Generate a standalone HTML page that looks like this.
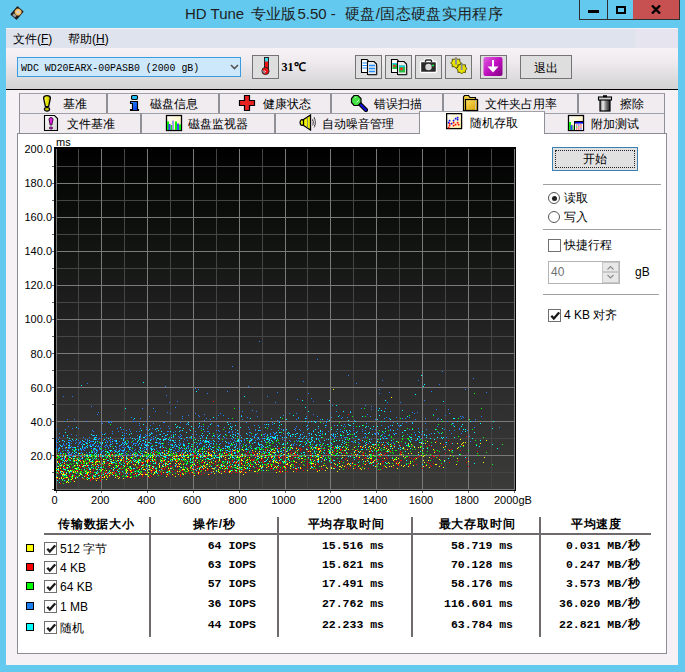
<!DOCTYPE html>
<html><head><meta charset="utf-8">
<style>
*{margin:0;padding:0;box-sizing:border-box}
html,body{width:685px;height:672px;overflow:hidden}
body{position:relative;background:#63c9ee;font-family:"Liberation Sans",sans-serif;font-size:12px;color:#000}
.a{position:absolute}
.title{top:4.5px;font-size:15px;color:#1e1e1e;white-space:nowrap;letter-spacing:0px}
.wb{top:0;height:20px;border:1px solid #2f2f2f;border-top:none}
.client{left:6px;top:28px;width:672px;height:637px;background:#f5f1f5}
.menu{left:6px;top:29px;width:672px;height:19px;background:#dfe3ee}
.mi{top:31px;font-size:12px;white-space:nowrap}
.toolbar{left:6px;top:48px;width:672px;height:41px;background:linear-gradient(#f6f2f6,#eeeaee 35%,#e1dfe1 65%,#d3d3d3)}
.tbline{left:6px;top:89px;width:672px;height:1px;background:#000}
.combo{left:17px;top:57px;width:224px;height:20px;background:#cde8fb;border:1px solid #3a9be0}
.combo span{position:absolute;left:3px;top:3.5px;font-family:"Liberation Mono",monospace;font-size:11px;line-height:13px;white-space:nowrap;transform:scaleX(0.9);transform-origin:0 0}
.btn{top:55px;height:24px;width:27px;background:#dedede;border:1px solid #747474}
.tab{height:20px;background:#f0ecf0;border-top:1px solid #a0a0a8;border-right:2px solid #8f8f97;white-space:nowrap}
.tt{font-size:12px;line-height:16px;white-space:nowrap}
.panel{left:17px;top:133px;width:650px;height:521px;background:#fff;border:1px solid #8c8c94}
.yl{position:absolute;left:14px;width:38px;text-align:right;font-size:11px;line-height:14px}
.xl{position:absolute;top:493px;width:40px;text-align:center;font-size:11px;line-height:14px}
.sep{height:1px;background:#a0a0a0}
.hd{top:516px;font-weight:bold;font-size:12px;text-align:center;white-space:nowrap;letter-spacing:0.8px}
.vl{top:517px;width:2px;height:120px;background:#6e6a6e}
.val{font-family:"Liberation Mono",monospace;font-weight:bold;font-size:11.5px;text-align:right;white-space:nowrap;line-height:14px}
.sq{left:26px;width:8px;height:8px;border:1px solid #000}
.cb{width:13px;height:13px;border:1px solid #707070;background:#fff}
.lbl{font-size:12px;white-space:nowrap;line-height:14px}
</style></head><body>
<!-- title bar -->

<div class="a title" style="left:185px">HD Tune</div><div class="a title" style="left:250.5px">专业版</div><div class="a title" style="left:297.5px">5.50 -</div><div class="a title" style="left:345px;letter-spacing:0.35px">硬盘/固态硬盘实用程序</div>
<div class="a wb" style="left:579px;width:29px"><div class="a" style="left:8px;top:10px;width:11px;height:3px;background:#000"></div></div>
<div class="a wb" style="left:607px;width:27px;border-left:none"><div class="a" style="left:9px;top:5.5px;width:10px;height:8px;border:2px solid #000;border-left-width:2.5px;border-right-width:2.5px"></div></div>
<div class="a wb" style="left:633px;width:47px;background:#c75050;border-left:none">
 <svg class="a" style="left:18px;top:5px" width="10" height="9" viewBox="0 0 10 9"><path d="M1 0.5L9 8.5M9 0.5L1 8.5" stroke="#000" stroke-width="2.4"/></svg>
</div>
<!-- client -->
<div class="a client"></div>
<div class="a menu"></div><div class="a" style="left:635px;top:29px;width:43px;height:19px;background:#e6e5ef"></div>
<div class="a mi" style="left:13px">文件(<u>F</u>)</div>
<div class="a mi" style="left:68px">帮助(<u>H</u>)</div>
<div class="a toolbar"></div>
<div class="a tbline"></div>
<div class="a combo"><span>WDC WD20EARX-00PASB0 (2000 gB)</span>
 <svg class="a" style="left:212px;top:6px" width="9" height="6"><path d="M1 1L4.5 4.5L8 1" stroke="#555" stroke-width="1.6" fill="none"/></svg></div>
<div class="a btn" style="left:252px">
 
</div>
<div class="a" style="left:281.5px;top:60px;font-family:'Liberation Serif',serif;font-weight:bold;font-size:12px;line-height:14px;white-space:nowrap">31<span style="font-size:12px;letter-spacing:-1px">℃</span></div>
<div class="a btn" style="left:355px"></div>
<div class="a btn" style="left:385px"></div>
<div class="a btn" style="left:415px"></div>
<div class="a btn" style="left:445px"></div>
<div class="a btn" style="left:480px"></div>
<div class="a btn" style="left:520px;width:52px"><div class="a" style="left:0;top:4px;width:50px;text-align:center;font-size:12px">退出</div></div>

<!-- tabs row 1 -->
<div class="a tab" style="left:19px;top:93px;width:89px;border-left:1px solid #8f8f97;"></div><div class="a tt" style="left:63.2px;top:95.8px">基准</div>
<div class="a tab" style="left:108px;top:93px;width:112px;"></div><div class="a tt" style="left:150.2px;top:95.8px">磁盘信息</div>
<div class="a tab" style="left:220px;top:93px;width:112px;"></div><div class="a tt" style="left:262.7px;top:95.8px">健康状态</div>
<div class="a tab" style="left:332px;top:93px;width:112px;"></div><div class="a tt" style="left:373.7px;top:95.8px">错误扫描</div>
<div class="a tab" style="left:444px;top:93px;width:135px;"></div><div class="a tt" style="left:485.2px;top:95.8px">文件夹占用率</div>
<div class="a tab" style="left:579px;top:93px;width:86px;border-right-width:1px;"></div><div class="a tt" style="left:620.2px;top:95.8px">擦除</div>
<div class="a tab" style="left:19px;top:113px;width:123px;border-left:1px solid #8f8f97;"></div><div class="a tt" style="left:66.7px;top:115.8px">文件基准</div>
<div class="a tab" style="left:142px;top:113px;width:134px;"></div><div class="a tt" style="left:188.2px;top:115.8px">磁盘监视器</div>
<div class="a tab" style="left:276px;top:113px;width:145px;"></div><div class="a tt" style="left:322.2px;top:115.8px">自动噪音管理</div>
<div class="a tab" style="left:545px;top:113px;width:120px;border-right-width:1px;"></div><div class="a tt" style="left:590.7px;top:115.8px">附加测试</div>
<!-- panel -->
<div class="a panel"></div>
<div class="a tab" style="left:419px;top:111px;width:126px;height:23px;background:#fff;border-left:1px solid #8f8f97;border-right-width:1px"></div><div class="a tt" style="left:469.7px;top:114.8px">随机存取</div>

<svg class="a" style="left:0;top:0" width="685" height="672" shape-rendering="crispEdges"><defs><linearGradient id="bg" x1="0" y1="0" x2="0" y2="1"><stop offset="0" stop-color="#000"/><stop offset="0.1" stop-color="#060806"/><stop offset="0.25" stop-color="#101210"/><stop offset="0.5" stop-color="#202120"/><stop offset="0.75" stop-color="#2e2f2e"/><stop offset="1" stop-color="#3b3c3a"/></linearGradient></defs><rect x="54" y="147" width="462" height="344" fill="#000"/><rect x="56" y="149" width="459" height="341" fill="url(#bg)"/><path d="M78.5 149V490M124.5 149V490M170.5 149V490M216.5 149V490M262.5 149V490M307.5 149V490M353.5 149V490M399.5 149V490M445.5 149V490M491.5 149V490M56 472.5H515M56 438.5H515M56 404.5H515M56 370.5H515M56 336.5H515M56 302.5H515M56 268.5H515M56 234.5H515M56 200.5H515M56 166.5H515" stroke="#444544" fill="none"/><path d="M56.5 149V490M101.5 149V490M147.5 149V490M193.5 149V490M239.5 149V490M285.5 149V490M330.5 149V490M376.5 149V490M422.5 149V490M468.5 149V490M514.5 149V490M56 489.5H515M56 455.5H515M56 421.5H515M56 387.5H515M56 353.5H515M56 319.5H515M56 285.5H515M56 251.5H515M56 217.5H515M56 183.5H515" stroke="#7a7a7a" fill="none"/><path d="M159 470h1v1h-1zM232 451h1v1h-1zM457 443h1v1h-1zM346 467h1v1h-1zM150 457h1v1h-1zM71 479h1v1h-1zM180 463h1v1h-1zM254 471h1v1h-1zM112 454h1v1h-1zM175 458h1v1h-1zM346 458h1v1h-1zM236 459h1v1h-1zM300 468h1v1h-1zM185 459h1v1h-1zM185 451h1v1h-1zM61 465h1v1h-1zM176 461h1v1h-1zM95 474h1v1h-1zM328 449h1v1h-1zM265 455h1v1h-1zM61 478h1v1h-1zM219 454h1v1h-1zM268 464h1v1h-1zM68 479h1v1h-1zM277 451h1v1h-1zM204 451h1v1h-1zM168 461h1v1h-1zM187 469h1v1h-1zM129 467h1v1h-1zM394 446h1v1h-1zM373 453h1v1h-1zM179 466h1v1h-1zM203 465h1v1h-1zM224 453h1v1h-1zM109 475h1v1h-1zM274 456h1v1h-1zM270 451h1v1h-1zM163 464h1v1h-1zM288 453h1v1h-1zM362 447h1v1h-1zM259 451h1v1h-1zM342 465h1v1h-1zM72 476h1v1h-1zM401 454h1v1h-1zM279 457h1v1h-1zM339 469h1v1h-1zM301 456h1v1h-1zM135 456h1v1h-1zM398 442h1v1h-1zM97 478h1v1h-1zM225 472h1v1h-1zM290 456h1v1h-1zM360 451h1v1h-1zM320 455h1v1h-1zM403 447h1v1h-1zM57 462h1v1h-1zM61 477h1v1h-1zM249 451h1v1h-1zM373 461h1v1h-1zM423 466h1v1h-1zM163 472h1v1h-1zM66 455h1v1h-1zM373 447h1v1h-1zM68 482h1v1h-1zM318 459h1v1h-1zM89 459h1v1h-1zM355 450h1v1h-1zM93 455h1v1h-1zM165 464h1v1h-1zM85 465h1v1h-1zM147 461h1v1h-1zM428 460h1v1h-1zM168 467h1v1h-1zM273 461h1v1h-1zM421 455h1v1h-1zM204 466h1v1h-1zM230 471h1v1h-1zM146 456h1v1h-1zM84 469h1v1h-1zM238 469h1v1h-1zM210 455h1v1h-1zM131 458h1v1h-1zM312 449h1v1h-1zM172 474h1v1h-1zM133 464h1v1h-1zM255 451h1v1h-1zM427 441h1v1h-1zM168 468h1v1h-1zM249 459h1v1h-1zM308 451h1v1h-1zM380 463h1v1h-1zM204 456h1v1h-1zM228 458h1v1h-1zM104 461h1v1h-1zM236 462h1v1h-1zM93 459h1v1h-1zM360 446h1v1h-1zM307 470h1v1h-1zM342 447h1v1h-1zM62 456h1v1h-1zM142 455h1v1h-1zM296 462h1v1h-1zM79 460h1v1h-1zM103 467h1v1h-1zM218 471h1v1h-1zM96 461h1v1h-1zM238 451h1v1h-1zM146 452h1v1h-1zM371 458h1v1h-1zM335 464h1v1h-1zM208 452h1v1h-1zM152 456h1v1h-1zM84 454h1v1h-1zM449 450h1v1h-1zM178 460h1v1h-1zM90 461h1v1h-1zM295 468h1v1h-1zM96 469h1v1h-1zM56 470h1v1h-1zM184 469h1v1h-1zM136 466h1v1h-1zM247 459h1v1h-1zM164 456h1v1h-1zM301 458h1v1h-1zM421 443h1v1h-1zM109 473h1v1h-1zM172 457h1v1h-1zM326 467h1v1h-1zM186 455h1v1h-1zM162 465h1v1h-1zM68 465h1v1h-1zM294 461h1v1h-1zM64 472h1v1h-1zM112 472h1v1h-1zM323 449h1v1h-1zM349 464h1v1h-1zM143 465h1v1h-1zM200 456h1v1h-1zM136 476h1v1h-1zM66 482h1v1h-1zM245 472h1v1h-1zM113 467h1v1h-1zM341 467h1v1h-1zM219 456h1v1h-1zM188 457h1v1h-1zM211 456h1v1h-1zM104 476h1v1h-1zM486 440h1v1h-1zM367 460h1v1h-1zM250 466h1v1h-1zM394 459h1v1h-1zM57 461h1v1h-1zM268 466h1v1h-1zM219 467h1v1h-1zM369 451h1v1h-1zM97 461h1v1h-1zM142 467h1v1h-1zM230 457h1v1h-1zM243 474h1v1h-1zM320 450h1v1h-1zM163 466h1v1h-1zM152 457h1v1h-1zM348 463h1v1h-1zM339 463h1v1h-1zM134 459h1v1h-1zM79 475h1v1h-1zM60 468h1v1h-1zM149 469h1v1h-1zM106 475h1v1h-1zM216 457h1v1h-1zM194 456h1v1h-1zM202 460h1v1h-1zM330 452h1v1h-1zM409 446h1v1h-1zM143 469h1v1h-1zM111 473h1v1h-1zM290 466h1v1h-1zM117 476h1v1h-1zM103 461h1v1h-1zM280 454h1v1h-1zM393 467h1v1h-1zM87 454h1v1h-1zM190 454h1v1h-1zM78 467h1v1h-1zM177 467h1v1h-1zM61 473h1v1h-1zM163 461h1v1h-1zM135 465h1v1h-1zM271 457h1v1h-1zM61 456h1v1h-1zM297 468h1v1h-1zM256 464h1v1h-1zM109 465h1v1h-1zM386 448h1v1h-1zM426 465h1v1h-1zM156 468h1v1h-1zM439 466h1v1h-1zM186 463h1v1h-1zM214 458h1v1h-1zM139 460h1v1h-1zM445 453h1v1h-1zM147 474h1v1h-1zM356 456h1v1h-1zM287 457h1v1h-1zM221 456h1v1h-1zM341 467h1v1h-1zM208 474h1v1h-1zM143 462h1v1h-1zM363 455h1v1h-1zM109 456h1v1h-1zM396 457h1v1h-1zM215 462h1v1h-1zM212 456h1v1h-1zM398 458h1v1h-1zM192 472h1v1h-1zM407 449h1v1h-1zM401 465h1v1h-1zM64 474h1v1h-1zM167 474h1v1h-1zM126 471h1v1h-1zM188 471h1v1h-1zM172 460h1v1h-1zM385 460h1v1h-1zM291 447h1v1h-1zM107 456h1v1h-1zM164 454h1v1h-1zM240 456h1v1h-1zM199 454h1v1h-1zM171 468h1v1h-1zM190 465h1v1h-1zM450 455h1v1h-1zM209 466h1v1h-1zM468 461h1v1h-1zM344 450h1v1h-1zM139 472h1v1h-1zM337 471h1v1h-1zM149 467h1v1h-1zM95 456h1v1h-1zM143 459h1v1h-1zM114 462h1v1h-1zM444 460h1v1h-1zM240 472h1v1h-1zM339 452h1v1h-1zM377 441h1v1h-1zM218 469h1v1h-1zM408 466h1v1h-1zM160 459h1v1h-1zM159 467h1v1h-1zM176 462h1v1h-1zM137 461h1v1h-1zM224 466h1v1h-1zM59 478h1v1h-1zM200 471h1v1h-1zM411 453h1v1h-1zM97 474h1v1h-1zM187 469h1v1h-1zM129 461h1v1h-1zM308 458h1v1h-1zM110 459h1v1h-1zM59 457h1v1h-1zM192 464h1v1h-1zM106 470h1v1h-1zM384 447h1v1h-1zM410 461h1v1h-1zM185 452h1v1h-1zM362 459h1v1h-1zM360 468h1v1h-1zM283 447h1v1h-1zM121 458h1v1h-1zM266 470h1v1h-1zM214 473h1v1h-1zM310 468h1v1h-1zM361 469h1v1h-1zM66 447h1v1h-1zM250 462h1v1h-1zM195 460h1v1h-1zM72 478h1v1h-1zM245 468h1v1h-1zM342 457h1v1h-1zM73 472h1v1h-1zM75 471h1v1h-1zM179 464h1v1h-1zM172 457h1v1h-1zM170 463h1v1h-1zM140 473h1v1h-1zM92 455h1v1h-1zM272 456h1v1h-1zM123 478h1v1h-1zM311 447h1v1h-1zM82 477h1v1h-1zM146 460h1v1h-1zM107 477h1v1h-1zM198 472h1v1h-1zM143 465h1v1h-1zM213 452h1v1h-1zM239 457h1v1h-1zM380 453h1v1h-1zM69 471h1v1h-1zM403 456h1v1h-1zM241 463h1v1h-1zM291 461h1v1h-1zM127 463h1v1h-1zM261 458h1v1h-1zM398 463h1v1h-1zM220 456h1v1h-1zM253 455h1v1h-1zM219 472h1v1h-1zM396 463h1v1h-1zM77 459h1v1h-1zM296 448h1v1h-1zM229 471h1v1h-1zM176 456h1v1h-1zM65 460h1v1h-1zM147 470h1v1h-1zM162 458h1v1h-1zM115 475h1v1h-1zM76 460h1v1h-1zM321 457h1v1h-1zM142 462h1v1h-1zM103 459h1v1h-1zM87 473h1v1h-1zM181 467h1v1h-1zM425 443h1v1h-1zM151 470h1v1h-1zM340 466h1v1h-1zM80 461h1v1h-1zM368 458h1v1h-1zM331 467h1v1h-1zM317 461h1v1h-1zM134 454h1v1h-1zM75 468h1v1h-1zM221 464h1v1h-1zM123 457h1v1h-1zM397 468h1v1h-1zM242 449h1v1h-1zM302 458h1v1h-1zM347 460h1v1h-1zM168 451h1v1h-1zM142 474h1v1h-1zM168 453h1v1h-1zM150 456h1v1h-1zM276 472h1v1h-1zM320 457h1v1h-1zM208 455h1v1h-1zM294 452h1v1h-1zM132 456h1v1h-1zM222 464h1v1h-1zM218 464h1v1h-1zM268 450h1v1h-1zM225 455h1v1h-1zM294 453h1v1h-1zM120 460h1v1h-1zM77 471h1v1h-1zM324 453h1v1h-1zM319 448h1v1h-1zM86 478h1v1h-1zM200 467h1v1h-1zM353 468h1v1h-1zM381 450h1v1h-1zM198 451h1v1h-1zM101 472h1v1h-1zM273 460h1v1h-1zM344 455h1v1h-1zM182 473h1v1h-1zM391 466h1v1h-1zM364 468h1v1h-1zM282 471h1v1h-1zM276 467h1v1h-1zM219 460h1v1h-1zM124 466h1v1h-1zM196 457h1v1h-1zM294 453h1v1h-1zM403 466h1v1h-1zM97 464h1v1h-1zM198 473h1v1h-1zM126 472h1v1h-1zM254 454h1v1h-1zM153 456h1v1h-1zM146 474h1v1h-1zM68 470h1v1h-1zM207 464h1v1h-1zM80 466h1v1h-1zM249 455h1v1h-1zM255 471h1v1h-1zM306 449h1v1h-1zM386 463h1v1h-1zM315 447h1v1h-1zM92 462h1v1h-1zM162 452h1v1h-1zM375 444h1v1h-1zM435 464h1v1h-1zM274 452h1v1h-1zM119 471h1v1h-1zM238 457h1v1h-1zM150 468h1v1h-1zM203 468h1v1h-1zM190 467h1v1h-1zM95 462h1v1h-1zM74 460h1v1h-1zM292 448h1v1h-1zM175 463h1v1h-1zM227 463h1v1h-1zM279 471h1v1h-1zM346 448h1v1h-1zM275 466h1v1h-1zM116 465h1v1h-1zM130 466h1v1h-1zM114 456h1v1h-1zM365 447h1v1h-1zM57 462h1v1h-1zM159 463h1v1h-1zM390 446h1v1h-1zM286 451h1v1h-1zM225 457h1v1h-1zM117 460h1v1h-1zM166 463h1v1h-1zM358 451h1v1h-1zM259 469h1v1h-1zM186 455h1v1h-1zM56 477h1v1h-1zM235 456h1v1h-1zM312 463h1v1h-1zM457 458h1v1h-1zM185 467h1v1h-1zM323 465h1v1h-1zM167 455h1v1h-1zM258 470h1v1h-1zM96 456h1v1h-1zM113 473h1v1h-1zM287 463h1v1h-1zM184 452h1v1h-1zM93 478h1v1h-1zM139 474h1v1h-1zM336 447h1v1h-1zM333 389h1v1h-1zM172 468h1v1h-1zM352 449h1v1h-1zM183 474h1v1h-1zM191 472h1v1h-1zM266 467h1v1h-1zM166 455h1v1h-1zM87 477h1v1h-1zM281 453h1v1h-1zM283 454h1v1h-1zM91 454h1v1h-1zM172 455h1v1h-1zM212 468h1v1h-1zM201 466h1v1h-1zM354 452h1v1h-1zM316 459h1v1h-1zM443 447h1v1h-1zM352 463h1v1h-1zM422 450h1v1h-1zM74 481h1v1h-1zM108 455h1v1h-1zM168 464h1v1h-1zM57 477h1v1h-1zM133 459h1v1h-1zM140 471h1v1h-1zM350 465h1v1h-1zM250 464h1v1h-1zM355 454h1v1h-1zM241 471h1v1h-1zM389 466h1v1h-1zM83 463h1v1h-1zM287 471h1v1h-1zM206 464h1v1h-1zM380 464h1v1h-1zM369 454h1v1h-1zM325 470h1v1h-1zM178 474h1v1h-1zM74 458h1v1h-1zM321 468h1v1h-1zM408 443h1v1h-1zM209 464h1v1h-1zM375 466h1v1h-1zM241 454h1v1h-1zM286 457h1v1h-1zM424 462h1v1h-1zM89 469h1v1h-1zM365 445h1v1h-1zM77 465h1v1h-1zM317 454h1v1h-1zM370 448h1v1h-1zM164 460h1v1h-1zM106 459h1v1h-1zM237 456h1v1h-1zM140 460h1v1h-1zM110 472h1v1h-1zM176 458h1v1h-1zM275 456h1v1h-1zM234 465h1v1h-1zM324 460h1v1h-1zM75 456h1v1h-1zM336 449h1v1h-1zM154 472h1v1h-1zM77 468h1v1h-1zM257 461h1v1h-1zM128 468h1v1h-1zM211 454h1v1h-1zM63 474h1v1h-1zM152 460h1v1h-1zM115 456h1v1h-1zM142 456h1v1h-1zM111 463h1v1h-1zM305 456h1v1h-1zM135 454h1v1h-1zM84 476h1v1h-1zM212 451h1v1h-1zM319 444h1v1h-1zM183 464h1v1h-1zM214 453h1v1h-1zM344 466h1v1h-1zM126 469h1v1h-1zM63 478h1v1h-1zM345 449h1v1h-1zM270 454h1v1h-1zM187 454h1v1h-1zM314 466h1v1h-1zM129 466h1v1h-1zM237 450h1v1h-1zM418 452h1v1h-1zM338 447h1v1h-1zM145 474h1v1h-1zM132 454h1v1h-1zM396 459h1v1h-1zM244 469h1v1h-1zM66 455h1v1h-1zM82 457h1v1h-1zM99 461h1v1h-1zM209 454h1v1h-1zM375 448h1v1h-1zM273 462h1v1h-1zM155 462h1v1h-1zM317 471h1v1h-1zM127 458h1v1h-1zM76 463h1v1h-1zM118 465h1v1h-1zM67 477h1v1h-1zM247 462h1v1h-1zM371 446h1v1h-1zM136 462h1v1h-1zM250 463h1v1h-1zM96 480h1v1h-1zM372 451h1v1h-1zM463 442h1v1h-1zM193 466h1v1h-1zM150 455h1v1h-1zM310 459h1v1h-1zM255 462h1v1h-1zM79 469h1v1h-1zM88 457h1v1h-1zM238 452h1v1h-1zM112 474h1v1h-1zM65 460h1v1h-1zM381 454h1v1h-1zM410 463h1v1h-1zM112 464h1v1h-1zM153 474h1v1h-1zM249 455h1v1h-1zM193 456h1v1h-1zM457 448h1v1h-1zM113 460h1v1h-1zM66 472h1v1h-1zM461 444h1v1h-1zM297 450h1v1h-1zM175 476h1v1h-1zM333 468h1v1h-1zM180 454h1v1h-1zM315 462h1v1h-1zM290 445h1v1h-1zM294 453h1v1h-1zM179 459h1v1h-1zM241 459h1v1h-1zM239 471h1v1h-1zM277 466h1v1h-1zM99 477h1v1h-1zM185 455h1v1h-1zM190 465h1v1h-1zM234 450h1v1h-1zM225 468h1v1h-1zM341 467h1v1h-1zM241 467h1v1h-1zM283 461h1v1h-1zM148 476h1v1h-1zM211 462h1v1h-1zM382 444h1v1h-1zM67 481h1v1h-1zM456 464h1v1h-1zM237 468h1v1h-1zM57 455h1v1h-1zM115 477h1v1h-1zM208 453h1v1h-1zM205 470h1v1h-1zM61 471h1v1h-1zM184 469h1v1h-1zM62 474h1v1h-1zM164 454h1v1h-1zM301 462h1v1h-1zM194 475h1v1h-1zM91 456h1v1h-1zM257 453h1v1h-1zM152 466h1v1h-1zM387 450h1v1h-1zM462 443h1v1h-1zM484 457h1v1h-1zM111 461h1v1h-1zM110 474h1v1h-1zM57 461h1v1h-1zM244 467h1v1h-1zM186 460h1v1h-1zM58 468h1v1h-1zM435 442h1v1h-1zM154 473h1v1h-1zM87 479h1v1h-1zM287 464h1v1h-1zM211 455h1v1h-1zM237 466h1v1h-1zM188 470h1v1h-1zM319 466h1v1h-1zM483 462h1v1h-1zM382 444h1v1h-1zM90 471h1v1h-1zM149 465h1v1h-1zM228 471h1v1h-1zM293 471h1v1h-1zM154 454h1v1h-1zM284 461h1v1h-1zM290 468h1v1h-1zM159 465h1v1h-1zM150 469h1v1h-1zM214 468h1v1h-1zM264 454h1v1h-1zM58 470h1v1h-1zM205 456h1v1h-1zM140 473h1v1h-1zM174 458h1v1h-1zM423 460h1v1h-1zM404 465h1v1h-1zM239 467h1v1h-1zM101 470h1v1h-1zM385 466h1v1h-1zM285 457h1v1h-1zM142 475h1v1h-1zM83 461h1v1h-1zM102 477h1v1h-1zM73 471h1v1h-1zM316 456h1v1h-1zM135 473h1v1h-1zM243 450h1v1h-1zM354 447h1v1h-1zM131 472h1v1h-1zM187 462h1v1h-1zM379 447h1v1h-1zM192 458h1v1h-1zM249 457h1v1h-1zM290 465h1v1h-1zM260 465h1v1h-1zM118 478h1v1h-1zM408 446h1v1h-1zM86 473h1v1h-1zM127 464h1v1h-1zM318 454h1v1h-1zM346 444h1v1h-1zM319 470h1v1h-1zM373 455h1v1h-1zM126 457h1v1h-1zM56 457h1v1h-1zM289 456h1v1h-1zM278 463h1v1h-1zM389 463h1v1h-1zM429 463h1v1h-1zM374 460h1v1h-1zM249 470h1v1h-1zM113 469h1v1h-1zM235 470h1v1h-1zM145 452h1v1h-1zM90 469h1v1h-1zM310 455h1v1h-1zM273 452h1v1h-1zM331 454h1v1h-1zM86 463h1v1h-1zM166 476h1v1h-1zM118 458h1v1h-1zM193 469h1v1h-1zM222 468h1v1h-1zM219 472h1v1h-1zM416 458h1v1h-1zM208 449h1v1h-1zM85 471h1v1h-1zM439 459h1v1h-1zM92 464h1v1h-1zM269 461h1v1h-1zM276 462h1v1h-1zM148 472h1v1h-1zM271 450h1v1h-1zM347 464h1v1h-1zM388 462h1v1h-1zM181 453h1v1h-1zM154 459h1v1h-1zM429 457h1v1h-1zM70 470h1v1h-1zM69 459h1v1h-1zM81 471h1v1h-1zM74 465h1v1h-1zM127 470h1v1h-1zM253 466h1v1h-1zM79 465h1v1h-1zM250 460h1v1h-1zM149 457h1v1h-1zM130 477h1v1h-1zM177 455h1v1h-1zM128 462h1v1h-1zM175 463h1v1h-1zM411 444h1v1h-1zM378 449h1v1h-1zM246 460h1v1h-1zM414 447h1v1h-1zM58 466h1v1h-1zM332 452h1v1h-1zM152 455h1v1h-1zM434 452h1v1h-1zM141 474h1v1h-1zM159 456h1v1h-1zM62 471h1v1h-1zM334 463h1v1h-1zM359 457h1v1h-1zM173 453h1v1h-1zM92 477h1v1h-1zM79 453h1v1h-1zM390 444h1v1h-1zM290 454h1v1h-1zM65 460h1v1h-1zM318 448h1v1h-1zM310 462h1v1h-1zM87 465h1v1h-1zM148 453h1v1h-1zM314 452h1v1h-1zM413 465h1v1h-1zM278 451h1v1h-1zM172 454h1v1h-1zM207 468h1v1h-1zM445 446h1v1h-1zM436 464h1v1h-1zM122 471h1v1h-1zM170 468h1v1h-1zM275 448h1v1h-1zM91 455h1v1h-1zM197 462h1v1h-1zM365 461h1v1h-1zM76 468h1v1h-1zM147 470h1v1h-1zM369 446h1v1h-1zM65 457h1v1h-1zM315 464h1v1h-1zM321 466h1v1h-1zM342 455h1v1h-1zM221 454h1v1h-1zM82 466h1v1h-1zM348 449h1v1h-1zM215 461h1v1h-1zM139 469h1v1h-1zM67 467h1v1h-1zM92 460h1v1h-1zM284 454h1v1h-1zM96 462h1v1h-1zM159 466h1v1h-1zM241 460h1v1h-1zM63 473h1v1h-1zM314 460h1v1h-1zM104 463h1v1h-1zM370 458h1v1h-1zM183 454h1v1h-1zM194 452h1v1h-1zM175 460h1v1h-1zM202 460h1v1h-1zM228 460h1v1h-1zM109 476h1v1h-1zM317 459h1v1h-1zM318 449h1v1h-1zM127 476h1v1h-1zM258 464h1v1h-1zM182 457h1v1h-1zM68 465h1v1h-1zM300 467h1v1h-1zM182 469h1v1h-1zM252 450h1v1h-1zM480 443h1v1h-1zM226 452h1v1h-1zM176 458h1v1h-1zM184 469h1v1h-1zM339 466h1v1h-1zM392 448h1v1h-1zM138 475h1v1h-1zM90 479h1v1h-1zM222 462h1v1h-1zM365 464h1v1h-1zM68 454h1v1h-1zM284 466h1v1h-1zM236 467h1v1h-1zM179 471h1v1h-1zM169 470h1v1h-1zM232 455h1v1h-1zM384 458h1v1h-1zM178 463h1v1h-1zM88 472h1v1h-1zM272 449h1v1h-1zM311 463h1v1h-1zM119 462h1v1h-1zM377 461h1v1h-1zM242 455h1v1h-1zM216 470h1v1h-1zM274 450h1v1h-1zM223 456h1v1h-1zM64 463h1v1h-1zM147 460h1v1h-1zM196 468h1v1h-1zM167 453h1v1h-1zM207 464h1v1h-1zM130 466h1v1h-1zM339 448h1v1h-1zM110 456h1v1h-1zM310 451h1v1h-1zM81 474h1v1h-1zM135 456h1v1h-1zM87 474h1v1h-1zM193 457h1v1h-1zM405 457h1v1h-1zM176 455h1v1h-1zM386 467h1v1h-1zM130 470h1v1h-1zM273 469h1v1h-1zM122 456h1v1h-1zM235 464h1v1h-1zM258 461h1v1h-1zM83 465h1v1h-1zM237 472h1v1h-1zM327 468h1v1h-1zM169 455h1v1h-1zM320 457h1v1h-1zM177 471h1v1h-1zM393 460h1v1h-1zM151 470h1v1h-1zM262 466h1v1h-1zM393 465h1v1h-1zM109 476h1v1h-1zM180 461h1v1h-1zM185 461h1v1h-1zM242 460h1v1h-1zM146 468h1v1h-1zM265 457h1v1h-1zM237 457h1v1h-1zM106 479h1v1h-1zM257 456h1v1h-1zM175 476h1v1h-1zM144 469h1v1h-1zM138 463h1v1h-1zM316 448h1v1h-1zM147 455h1v1h-1zM206 455h1v1h-1zM141 469h1v1h-1zM174 456h1v1h-1zM191 466h1v1h-1zM261 467h1v1h-1zM131 457h1v1h-1zM291 464h1v1h-1zM233 450h1v1h-1zM370 462h1v1h-1zM80 473h1v1h-1zM219 457h1v1h-1zM463 445h1v1h-1zM232 461h1v1h-1zM130 468h1v1h-1zM141 465h1v1h-1zM313 463h1v1h-1zM261 456h1v1h-1zM213 471h1v1h-1zM145 466h1v1h-1zM249 442h1v1h-1zM262 453h1v1h-1zM89 460h1v1h-1zM319 452h1v1h-1zM388 449h1v1h-1zM113 458h1v1h-1zM148 459h1v1h-1zM372 462h1v1h-1zM174 457h1v1h-1zM110 470h1v1h-1zM458 447h1v1h-1zM69 454h1v1h-1zM460 439h1v1h-1zM177 466h1v1h-1zM156 470h1v1h-1zM194 464h1v1h-1zM433 449h1v1h-1zM66 473h1v1h-1zM205 467h1v1h-1zM87 455h1v1h-1zM465 442h1v1h-1zM100 454h1v1h-1zM140 454h1v1h-1zM161 474h1v1h-1zM183 469h1v1h-1zM219 459h1v1h-1zM289 462h1v1h-1zM423 456h1v1h-1zM69 466h1v1h-1zM231 466h1v1h-1zM147 462h1v1h-1zM424 455h1v1h-1zM71 458h1v1h-1zM238 463h1v1h-1zM135 464h1v1h-1zM358 466h1v1h-1zM211 455h1v1h-1zM162 465h1v1h-1zM399 462h1v1h-1zM63 466h1v1h-1zM224 471h1v1h-1zM172 459h1v1h-1zM275 461h1v1h-1zM429 467h1v1h-1zM391 397h1v1h-1zM343 462h1v1h-1zM443 467h1v1h-1zM259 457h1v1h-1zM229 472h1v1h-1zM331 449h1v1h-1zM121 459h1v1h-1zM370 458h1v1h-1zM195 455h1v1h-1zM221 473h1v1h-1zM204 462h1v1h-1zM76 477h1v1h-1zM225 459h1v1h-1zM167 464h1v1h-1zM122 456h1v1h-1zM369 446h1v1h-1zM187 457h1v1h-1zM86 474h1v1h-1zM221 465h1v1h-1zM318 458h1v1h-1zM285 467h1v1h-1zM96 456h1v1h-1zM199 469h1v1h-1zM217 465h1v1h-1zM118 456h1v1h-1zM138 462h1v1h-1zM274 467h1v1h-1zM260 466h1v1h-1zM420 447h1v1h-1zM311 466h1v1h-1zM259 453h1v1h-1zM245 456h1v1h-1zM440 443h1v1h-1zM130 460h1v1h-1zM75 478h1v1h-1zM323 456h1v1h-1zM77 471h1v1h-1zM273 469h1v1h-1zM147 470h1v1h-1zM403 448h1v1h-1zM102 469h1v1h-1zM66 477h1v1h-1zM277 462h1v1h-1zM281 450h1v1h-1zM244 454h1v1h-1zM280 459h1v1h-1zM271 466h1v1h-1zM209 462h1v1h-1zM161 460h1v1h-1zM331 468h1v1h-1zM87 472h1v1h-1zM61 473h1v1h-1zM418 447h1v1h-1zM286 464h1v1h-1zM118 478h1v1h-1zM65 456h1v1h-1zM244 465h1v1h-1zM180 455h1v1h-1zM56 468h1v1h-1zM179 455h1v1h-1zM239 449h1v1h-1zM213 452h1v1h-1zM109 463h1v1h-1zM315 455h1v1h-1zM149 457h1v1h-1zM207 461h1v1h-1zM231 454h1v1h-1zM95 464h1v1h-1zM204 455h1v1h-1zM408 453h1v1h-1zM152 468h1v1h-1zM104 477h1v1h-1zM121 460h1v1h-1zM66 459h1v1h-1zM156 471h1v1h-1zM193 465h1v1h-1zM119 477h1v1h-1zM128 459h1v1h-1z" fill="#ffff00"/><path d="M118 476h1v1h-1zM318 461h1v1h-1zM237 470h1v1h-1zM205 465h1v1h-1zM125 465h1v1h-1zM76 477h1v1h-1zM343 452h1v1h-1zM224 458h1v1h-1zM142 476h1v1h-1zM116 454h1v1h-1zM134 465h1v1h-1zM210 461h1v1h-1zM413 459h1v1h-1zM184 456h1v1h-1zM275 456h1v1h-1zM278 457h1v1h-1zM371 456h1v1h-1zM176 462h1v1h-1zM149 477h1v1h-1zM151 467h1v1h-1zM110 454h1v1h-1zM143 462h1v1h-1zM77 457h1v1h-1zM184 458h1v1h-1zM303 470h1v1h-1zM458 460h1v1h-1zM86 466h1v1h-1zM195 461h1v1h-1zM322 459h1v1h-1zM155 456h1v1h-1zM151 476h1v1h-1zM165 467h1v1h-1zM234 462h1v1h-1zM120 459h1v1h-1zM171 466h1v1h-1zM352 449h1v1h-1zM133 474h1v1h-1zM380 453h1v1h-1zM220 461h1v1h-1zM193 465h1v1h-1zM167 457h1v1h-1zM74 475h1v1h-1zM64 455h1v1h-1zM161 462h1v1h-1zM307 463h1v1h-1zM194 473h1v1h-1zM379 456h1v1h-1zM194 455h1v1h-1zM155 469h1v1h-1zM436 441h1v1h-1zM354 465h1v1h-1zM285 457h1v1h-1zM346 467h1v1h-1zM253 452h1v1h-1zM164 468h1v1h-1zM177 473h1v1h-1zM245 454h1v1h-1zM209 474h1v1h-1zM60 465h1v1h-1zM74 475h1v1h-1zM121 457h1v1h-1zM292 458h1v1h-1zM239 452h1v1h-1zM56 457h1v1h-1zM377 463h1v1h-1zM364 455h1v1h-1zM80 466h1v1h-1zM213 468h1v1h-1zM64 471h1v1h-1zM114 468h1v1h-1zM273 464h1v1h-1zM381 455h1v1h-1zM177 467h1v1h-1zM93 469h1v1h-1zM192 469h1v1h-1zM248 451h1v1h-1zM311 454h1v1h-1zM62 464h1v1h-1zM189 453h1v1h-1zM163 460h1v1h-1zM451 443h1v1h-1zM244 456h1v1h-1zM131 470h1v1h-1zM110 454h1v1h-1zM317 449h1v1h-1zM225 466h1v1h-1zM200 453h1v1h-1zM307 467h1v1h-1zM229 470h1v1h-1zM154 452h1v1h-1zM336 451h1v1h-1zM267 453h1v1h-1zM131 471h1v1h-1zM183 463h1v1h-1zM262 458h1v1h-1zM145 473h1v1h-1zM321 468h1v1h-1zM275 451h1v1h-1zM252 466h1v1h-1zM244 457h1v1h-1zM118 463h1v1h-1zM332 447h1v1h-1zM113 456h1v1h-1zM63 467h1v1h-1zM221 471h1v1h-1zM198 471h1v1h-1zM311 460h1v1h-1zM162 468h1v1h-1zM172 468h1v1h-1zM154 466h1v1h-1zM230 466h1v1h-1zM431 466h1v1h-1zM389 451h1v1h-1zM316 447h1v1h-1zM332 451h1v1h-1zM417 457h1v1h-1zM281 457h1v1h-1zM270 463h1v1h-1zM345 459h1v1h-1zM364 464h1v1h-1zM243 458h1v1h-1zM140 466h1v1h-1zM201 469h1v1h-1zM118 466h1v1h-1zM392 459h1v1h-1zM252 452h1v1h-1zM378 459h1v1h-1zM211 473h1v1h-1zM296 469h1v1h-1zM426 446h1v1h-1zM298 456h1v1h-1zM382 468h1v1h-1zM228 471h1v1h-1zM358 457h1v1h-1zM227 469h1v1h-1zM70 474h1v1h-1zM296 451h1v1h-1zM152 470h1v1h-1zM371 462h1v1h-1zM307 465h1v1h-1zM379 470h1v1h-1zM171 461h1v1h-1zM241 469h1v1h-1zM119 456h1v1h-1zM317 470h1v1h-1zM184 460h1v1h-1zM156 468h1v1h-1zM257 461h1v1h-1zM133 470h1v1h-1zM374 445h1v1h-1zM106 472h1v1h-1zM397 464h1v1h-1zM176 452h1v1h-1zM99 455h1v1h-1zM225 470h1v1h-1zM256 467h1v1h-1zM375 460h1v1h-1zM70 467h1v1h-1zM327 451h1v1h-1zM433 456h1v1h-1zM138 454h1v1h-1zM198 466h1v1h-1zM279 454h1v1h-1zM291 454h1v1h-1zM276 459h1v1h-1zM435 451h1v1h-1zM169 461h1v1h-1zM352 462h1v1h-1zM178 451h1v1h-1zM320 451h1v1h-1zM129 459h1v1h-1zM293 456h1v1h-1zM166 466h1v1h-1zM333 453h1v1h-1zM153 469h1v1h-1zM61 470h1v1h-1zM144 472h1v1h-1zM150 459h1v1h-1zM80 460h1v1h-1zM81 464h1v1h-1zM241 455h1v1h-1zM393 445h1v1h-1zM239 452h1v1h-1zM264 462h1v1h-1zM405 449h1v1h-1zM400 451h1v1h-1zM161 471h1v1h-1zM129 470h1v1h-1zM238 459h1v1h-1zM195 455h1v1h-1zM363 453h1v1h-1zM313 465h1v1h-1zM317 460h1v1h-1zM126 473h1v1h-1zM300 450h1v1h-1zM66 476h1v1h-1zM226 453h1v1h-1zM137 468h1v1h-1zM139 472h1v1h-1zM177 459h1v1h-1zM446 444h1v1h-1zM429 445h1v1h-1zM168 453h1v1h-1zM136 466h1v1h-1zM82 454h1v1h-1zM246 454h1v1h-1zM263 462h1v1h-1zM157 473h1v1h-1zM176 458h1v1h-1zM59 462h1v1h-1zM340 449h1v1h-1zM121 474h1v1h-1zM370 451h1v1h-1zM137 471h1v1h-1zM141 461h1v1h-1zM186 465h1v1h-1zM227 469h1v1h-1zM172 461h1v1h-1zM353 449h1v1h-1zM64 465h1v1h-1zM284 460h1v1h-1zM287 471h1v1h-1zM249 461h1v1h-1zM400 445h1v1h-1zM161 474h1v1h-1zM119 451h1v1h-1zM185 472h1v1h-1zM241 458h1v1h-1zM90 480h1v1h-1zM251 464h1v1h-1zM165 467h1v1h-1zM230 467h1v1h-1zM204 468h1v1h-1zM92 475h1v1h-1zM170 454h1v1h-1zM98 473h1v1h-1zM158 474h1v1h-1zM345 453h1v1h-1zM190 460h1v1h-1zM201 462h1v1h-1zM362 466h1v1h-1zM348 414h1v1h-1zM216 466h1v1h-1zM243 469h1v1h-1zM113 473h1v1h-1zM161 468h1v1h-1zM120 472h1v1h-1zM89 474h1v1h-1zM390 451h1v1h-1zM161 473h1v1h-1zM292 464h1v1h-1zM316 469h1v1h-1zM275 460h1v1h-1zM385 446h1v1h-1zM90 479h1v1h-1zM261 459h1v1h-1zM209 452h1v1h-1zM301 449h1v1h-1zM360 440h1v1h-1zM133 455h1v1h-1zM251 459h1v1h-1zM319 449h1v1h-1zM108 473h1v1h-1zM149 460h1v1h-1zM409 457h1v1h-1zM270 456h1v1h-1zM260 460h1v1h-1zM79 466h1v1h-1zM259 468h1v1h-1zM195 461h1v1h-1zM422 468h1v1h-1zM462 445h1v1h-1zM162 468h1v1h-1zM139 467h1v1h-1zM121 469h1v1h-1zM269 453h1v1h-1zM158 471h1v1h-1zM164 469h1v1h-1zM396 462h1v1h-1zM303 465h1v1h-1zM275 456h1v1h-1zM211 472h1v1h-1zM311 460h1v1h-1zM93 461h1v1h-1zM204 473h1v1h-1zM414 461h1v1h-1zM294 464h1v1h-1zM280 467h1v1h-1zM242 472h1v1h-1zM182 470h1v1h-1zM150 456h1v1h-1zM106 463h1v1h-1zM283 456h1v1h-1zM243 470h1v1h-1zM321 445h1v1h-1zM175 473h1v1h-1zM201 474h1v1h-1zM168 462h1v1h-1zM100 469h1v1h-1zM100 457h1v1h-1zM391 446h1v1h-1zM376 463h1v1h-1zM151 472h1v1h-1zM226 459h1v1h-1zM297 469h1v1h-1zM151 472h1v1h-1zM240 471h1v1h-1zM101 459h1v1h-1zM80 467h1v1h-1zM83 462h1v1h-1zM350 466h1v1h-1zM62 454h1v1h-1zM133 469h1v1h-1zM232 471h1v1h-1zM110 456h1v1h-1zM205 462h1v1h-1zM340 450h1v1h-1zM249 455h1v1h-1zM228 462h1v1h-1zM92 478h1v1h-1zM120 467h1v1h-1zM266 464h1v1h-1zM56 469h1v1h-1zM449 462h1v1h-1zM310 453h1v1h-1zM180 476h1v1h-1zM255 456h1v1h-1zM345 465h1v1h-1zM69 464h1v1h-1zM99 456h1v1h-1zM300 448h1v1h-1zM386 457h1v1h-1zM104 473h1v1h-1zM166 474h1v1h-1zM60 459h1v1h-1zM297 455h1v1h-1zM154 450h1v1h-1zM287 455h1v1h-1zM267 467h1v1h-1zM81 470h1v1h-1zM358 459h1v1h-1zM123 461h1v1h-1zM191 472h1v1h-1zM162 466h1v1h-1zM142 464h1v1h-1zM284 460h1v1h-1zM128 454h1v1h-1zM346 458h1v1h-1zM293 456h1v1h-1zM385 453h1v1h-1zM178 455h1v1h-1zM360 447h1v1h-1zM313 464h1v1h-1zM431 458h1v1h-1zM285 465h1v1h-1zM227 454h1v1h-1zM163 452h1v1h-1zM207 469h1v1h-1zM74 476h1v1h-1zM433 463h1v1h-1zM75 473h1v1h-1zM126 455h1v1h-1zM178 464h1v1h-1zM195 456h1v1h-1zM57 473h1v1h-1zM140 454h1v1h-1zM129 477h1v1h-1zM168 454h1v1h-1zM206 457h1v1h-1zM178 466h1v1h-1zM238 463h1v1h-1zM341 449h1v1h-1zM208 460h1v1h-1zM309 464h1v1h-1zM279 448h1v1h-1zM198 466h1v1h-1zM325 457h1v1h-1zM398 464h1v1h-1zM382 461h1v1h-1zM86 478h1v1h-1zM189 473h1v1h-1zM143 463h1v1h-1zM164 461h1v1h-1zM125 461h1v1h-1zM241 458h1v1h-1zM197 466h1v1h-1zM286 468h1v1h-1zM169 471h1v1h-1zM64 468h1v1h-1zM336 449h1v1h-1zM89 470h1v1h-1zM239 470h1v1h-1zM208 469h1v1h-1zM260 451h1v1h-1zM101 472h1v1h-1zM235 472h1v1h-1zM271 468h1v1h-1zM203 469h1v1h-1zM77 470h1v1h-1zM110 463h1v1h-1zM103 469h1v1h-1zM253 455h1v1h-1zM179 450h1v1h-1zM228 467h1v1h-1zM176 459h1v1h-1zM235 463h1v1h-1zM133 470h1v1h-1zM228 460h1v1h-1zM272 464h1v1h-1zM419 456h1v1h-1zM122 471h1v1h-1zM371 464h1v1h-1zM393 467h1v1h-1zM203 469h1v1h-1zM88 465h1v1h-1zM191 467h1v1h-1zM257 462h1v1h-1zM256 453h1v1h-1zM222 465h1v1h-1zM117 469h1v1h-1zM366 458h1v1h-1zM84 462h1v1h-1zM60 483h1v1h-1zM201 471h1v1h-1zM439 455h1v1h-1zM168 470h1v1h-1zM280 459h1v1h-1zM132 461h1v1h-1zM231 473h1v1h-1zM400 445h1v1h-1zM394 461h1v1h-1zM247 465h1v1h-1zM66 459h1v1h-1zM153 468h1v1h-1zM213 401h1v1h-1zM330 459h1v1h-1zM311 457h1v1h-1zM156 462h1v1h-1zM76 470h1v1h-1zM68 452h1v1h-1zM130 471h1v1h-1zM383 461h1v1h-1zM295 462h1v1h-1zM70 476h1v1h-1zM266 448h1v1h-1zM265 449h1v1h-1zM213 458h1v1h-1zM199 456h1v1h-1zM59 461h1v1h-1zM82 456h1v1h-1zM65 468h1v1h-1zM203 461h1v1h-1zM106 457h1v1h-1zM218 462h1v1h-1zM58 471h1v1h-1zM211 468h1v1h-1zM282 468h1v1h-1zM72 471h1v1h-1zM270 465h1v1h-1zM138 467h1v1h-1zM270 468h1v1h-1zM150 468h1v1h-1zM280 471h1v1h-1zM280 472h1v1h-1zM277 469h1v1h-1zM196 471h1v1h-1zM357 464h1v1h-1zM430 465h1v1h-1zM180 474h1v1h-1zM229 452h1v1h-1zM98 478h1v1h-1zM116 471h1v1h-1zM143 466h1v1h-1zM235 450h1v1h-1zM65 464h1v1h-1zM246 462h1v1h-1zM170 466h1v1h-1zM355 468h1v1h-1zM75 460h1v1h-1zM152 452h1v1h-1zM387 446h1v1h-1zM77 468h1v1h-1zM346 452h1v1h-1zM262 458h1v1h-1zM82 460h1v1h-1zM112 464h1v1h-1zM62 476h1v1h-1zM296 447h1v1h-1zM72 470h1v1h-1zM332 460h1v1h-1zM340 446h1v1h-1zM284 450h1v1h-1zM97 468h1v1h-1zM125 455h1v1h-1zM239 452h1v1h-1zM83 462h1v1h-1zM292 454h1v1h-1zM148 461h1v1h-1zM250 464h1v1h-1zM192 468h1v1h-1zM106 476h1v1h-1zM227 468h1v1h-1zM69 464h1v1h-1zM187 467h1v1h-1zM371 460h1v1h-1zM145 469h1v1h-1zM425 466h1v1h-1zM222 464h1v1h-1zM199 455h1v1h-1zM328 454h1v1h-1zM203 466h1v1h-1zM413 446h1v1h-1zM401 460h1v1h-1zM228 466h1v1h-1zM188 468h1v1h-1zM196 459h1v1h-1zM193 474h1v1h-1zM183 458h1v1h-1zM377 459h1v1h-1zM296 471h1v1h-1zM106 459h1v1h-1zM255 455h1v1h-1zM131 468h1v1h-1zM175 470h1v1h-1zM84 479h1v1h-1zM241 462h1v1h-1zM109 476h1v1h-1zM174 455h1v1h-1zM402 448h1v1h-1zM93 465h1v1h-1zM367 449h1v1h-1zM334 450h1v1h-1zM309 450h1v1h-1zM193 453h1v1h-1zM213 469h1v1h-1zM242 456h1v1h-1zM279 462h1v1h-1zM295 466h1v1h-1zM154 460h1v1h-1zM321 453h1v1h-1zM437 457h1v1h-1zM139 465h1v1h-1zM104 474h1v1h-1zM175 473h1v1h-1zM193 458h1v1h-1zM432 455h1v1h-1zM146 461h1v1h-1zM102 464h1v1h-1zM261 470h1v1h-1zM101 474h1v1h-1zM251 470h1v1h-1zM85 475h1v1h-1zM322 469h1v1h-1zM414 458h1v1h-1zM297 454h1v1h-1zM127 468h1v1h-1zM66 460h1v1h-1zM270 463h1v1h-1zM241 462h1v1h-1zM378 452h1v1h-1zM94 465h1v1h-1zM134 478h1v1h-1zM67 458h1v1h-1zM253 459h1v1h-1zM311 462h1v1h-1zM164 455h1v1h-1zM310 448h1v1h-1zM280 469h1v1h-1zM409 464h1v1h-1zM192 461h1v1h-1zM82 478h1v1h-1zM262 461h1v1h-1zM378 454h1v1h-1zM62 459h1v1h-1zM72 467h1v1h-1zM338 462h1v1h-1zM209 448h1v1h-1zM355 455h1v1h-1zM160 472h1v1h-1zM81 471h1v1h-1zM291 452h1v1h-1zM376 449h1v1h-1zM364 458h1v1h-1zM231 452h1v1h-1zM89 463h1v1h-1zM204 465h1v1h-1zM230 463h1v1h-1zM293 469h1v1h-1zM460 450h1v1h-1zM95 461h1v1h-1zM163 458h1v1h-1zM334 466h1v1h-1zM176 465h1v1h-1zM365 457h1v1h-1zM177 455h1v1h-1zM168 473h1v1h-1zM181 470h1v1h-1zM155 457h1v1h-1zM141 462h1v1h-1zM101 478h1v1h-1zM304 459h1v1h-1zM238 452h1v1h-1zM384 465h1v1h-1zM59 472h1v1h-1zM224 468h1v1h-1zM126 460h1v1h-1zM155 461h1v1h-1zM118 461h1v1h-1zM73 480h1v1h-1zM100 476h1v1h-1zM415 457h1v1h-1zM128 476h1v1h-1zM441 465h1v1h-1zM266 457h1v1h-1zM280 462h1v1h-1zM112 463h1v1h-1zM156 463h1v1h-1zM135 452h1v1h-1zM253 453h1v1h-1zM373 445h1v1h-1zM257 473h1v1h-1zM199 472h1v1h-1zM98 466h1v1h-1zM87 466h1v1h-1zM169 469h1v1h-1zM466 458h1v1h-1zM143 474h1v1h-1zM97 474h1v1h-1zM95 479h1v1h-1zM287 461h1v1h-1zM207 470h1v1h-1zM174 457h1v1h-1zM429 463h1v1h-1zM359 468h1v1h-1zM96 478h1v1h-1zM128 474h1v1h-1zM195 466h1v1h-1zM192 453h1v1h-1zM275 470h1v1h-1zM213 452h1v1h-1zM98 473h1v1h-1zM64 472h1v1h-1zM290 453h1v1h-1zM416 464h1v1h-1zM271 458h1v1h-1zM448 449h1v1h-1zM97 460h1v1h-1zM231 453h1v1h-1zM82 464h1v1h-1zM326 453h1v1h-1zM272 451h1v1h-1zM370 449h1v1h-1zM66 465h1v1h-1zM376 459h1v1h-1zM66 474h1v1h-1zM197 464h1v1h-1zM142 463h1v1h-1zM107 457h1v1h-1zM206 455h1v1h-1zM282 467h1v1h-1zM150 475h1v1h-1zM409 465h1v1h-1zM100 480h1v1h-1zM202 462h1v1h-1zM299 448h1v1h-1zM385 442h1v1h-1zM371 459h1v1h-1zM161 463h1v1h-1zM167 466h1v1h-1zM373 453h1v1h-1zM212 463h1v1h-1zM64 467h1v1h-1zM96 460h1v1h-1zM316 459h1v1h-1zM232 460h1v1h-1zM127 477h1v1h-1zM477 451h1v1h-1zM321 455h1v1h-1zM270 456h1v1h-1zM400 460h1v1h-1zM218 455h1v1h-1zM231 451h1v1h-1zM218 461h1v1h-1zM93 475h1v1h-1zM335 467h1v1h-1zM193 459h1v1h-1zM398 465h1v1h-1zM63 475h1v1h-1zM278 467h1v1h-1zM274 465h1v1h-1zM275 452h1v1h-1zM263 460h1v1h-1zM174 465h1v1h-1zM118 466h1v1h-1zM90 472h1v1h-1zM107 474h1v1h-1zM134 474h1v1h-1zM333 447h1v1h-1zM235 462h1v1h-1zM114 453h1v1h-1zM159 455h1v1h-1zM194 451h1v1h-1zM226 454h1v1h-1zM323 449h1v1h-1zM400 451h1v1h-1zM86 474h1v1h-1zM411 458h1v1h-1zM260 449h1v1h-1zM272 468h1v1h-1zM301 468h1v1h-1zM400 454h1v1h-1zM128 474h1v1h-1zM183 473h1v1h-1zM163 461h1v1h-1zM179 462h1v1h-1zM92 476h1v1h-1zM266 465h1v1h-1zM387 452h1v1h-1zM176 465h1v1h-1zM104 465h1v1h-1zM250 465h1v1h-1zM242 464h1v1h-1zM382 458h1v1h-1zM234 469h1v1h-1zM221 457h1v1h-1zM151 471h1v1h-1zM211 459h1v1h-1zM251 456h1v1h-1zM177 456h1v1h-1zM182 453h1v1h-1zM91 462h1v1h-1zM214 451h1v1h-1zM74 472h1v1h-1zM307 451h1v1h-1zM108 466h1v1h-1zM387 458h1v1h-1zM262 454h1v1h-1zM268 465h1v1h-1zM97 468h1v1h-1zM223 452h1v1h-1zM285 471h1v1h-1zM245 453h1v1h-1zM210 454h1v1h-1zM272 457h1v1h-1zM110 454h1v1h-1zM100 457h1v1h-1zM356 450h1v1h-1zM129 469h1v1h-1zM162 448h1v1h-1zM89 462h1v1h-1zM172 454h1v1h-1zM363 452h1v1h-1zM76 470h1v1h-1zM99 475h1v1h-1zM176 460h1v1h-1zM156 454h1v1h-1zM130 474h1v1h-1zM57 478h1v1h-1zM291 461h1v1h-1zM236 471h1v1h-1zM247 452h1v1h-1zM231 452h1v1h-1zM168 475h1v1h-1zM347 463h1v1h-1zM434 456h1v1h-1zM173 475h1v1h-1zM216 460h1v1h-1zM263 466h1v1h-1zM100 463h1v1h-1zM249 458h1v1h-1zM370 463h1v1h-1zM86 476h1v1h-1zM66 458h1v1h-1zM80 456h1v1h-1zM284 455h1v1h-1zM397 461h1v1h-1zM313 469h1v1h-1zM81 473h1v1h-1zM222 456h1v1h-1zM225 451h1v1h-1zM210 464h1v1h-1zM367 444h1v1h-1zM341 461h1v1h-1zM182 474h1v1h-1zM66 478h1v1h-1zM98 454h1v1h-1zM307 463h1v1h-1zM163 452h1v1h-1zM64 478h1v1h-1zM254 458h1v1h-1zM92 472h1v1h-1zM318 464h1v1h-1zM99 463h1v1h-1zM279 458h1v1h-1zM65 464h1v1h-1zM427 462h1v1h-1zM198 457h1v1h-1zM350 456h1v1h-1zM383 466h1v1h-1zM215 464h1v1h-1zM341 452h1v1h-1zM103 477h1v1h-1zM385 460h1v1h-1zM331 459h1v1h-1zM317 463h1v1h-1zM303 460h1v1h-1zM102 456h1v1h-1zM297 468h1v1h-1zM205 457h1v1h-1zM261 452h1v1h-1zM123 465h1v1h-1zM137 473h1v1h-1zM257 461h1v1h-1zM269 452h1v1h-1zM69 476h1v1h-1zM194 456h1v1h-1zM382 463h1v1h-1zM154 470h1v1h-1zM207 451h1v1h-1zM253 460h1v1h-1zM431 446h1v1h-1zM348 468h1v1h-1zM271 464h1v1h-1zM400 453h1v1h-1zM252 460h1v1h-1zM271 452h1v1h-1zM345 465h1v1h-1zM343 462h1v1h-1zM308 447h1v1h-1zM97 466h1v1h-1zM265 450h1v1h-1zM132 463h1v1h-1zM268 452h1v1h-1zM322 456h1v1h-1zM451 449h1v1h-1zM228 454h1v1h-1zM86 475h1v1h-1zM270 460h1v1h-1zM105 472h1v1h-1zM148 460h1v1h-1zM83 463h1v1h-1zM113 458h1v1h-1zM182 454h1v1h-1zM445 453h1v1h-1zM351 454h1v1h-1zM283 458h1v1h-1zM197 467h1v1h-1zM295 456h1v1h-1zM448 440h1v1h-1zM64 462h1v1h-1zM380 454h1v1h-1zM246 472h1v1h-1zM153 460h1v1h-1zM288 465h1v1h-1zM198 455h1v1h-1zM268 456h1v1h-1zM119 472h1v1h-1zM194 469h1v1h-1zM334 456h1v1h-1zM330 464h1v1h-1zM307 461h1v1h-1zM381 445h1v1h-1zM162 469h1v1h-1zM96 463h1v1h-1zM125 462h1v1h-1zM181 456h1v1h-1zM401 452h1v1h-1zM268 450h1v1h-1zM126 463h1v1h-1zM199 450h1v1h-1zM111 452h1v1h-1zM152 453h1v1h-1zM361 446h1v1h-1zM277 470h1v1h-1zM366 463h1v1h-1zM136 474h1v1h-1zM66 478h1v1h-1zM345 449h1v1h-1zM180 461h1v1h-1zM165 450h1v1h-1zM173 455h1v1h-1zM355 465h1v1h-1zM238 469h1v1h-1zM314 456h1v1h-1zM347 463h1v1h-1zM299 464h1v1h-1zM238 462h1v1h-1zM180 472h1v1h-1zM75 477h1v1h-1zM240 461h1v1h-1zM133 459h1v1h-1zM322 456h1v1h-1zM236 461h1v1h-1zM179 453h1v1h-1zM347 452h1v1h-1zM96 462h1v1h-1zM238 460h1v1h-1zM290 450h1v1h-1zM400 451h1v1h-1zM268 464h1v1h-1zM264 454h1v1h-1zM165 472h1v1h-1zM356 454h1v1h-1zM299 459h1v1h-1zM294 454h1v1h-1zM83 472h1v1h-1zM153 458h1v1h-1zM285 466h1v1h-1zM180 475h1v1h-1zM172 471h1v1h-1zM102 464h1v1h-1zM181 457h1v1h-1zM92 479h1v1h-1zM300 450h1v1h-1zM468 466h1v1h-1zM110 474h1v1h-1zM108 463h1v1h-1zM244 469h1v1h-1zM107 462h1v1h-1zM176 458h1v1h-1zM146 466h1v1h-1zM257 468h1v1h-1zM177 470h1v1h-1zM272 457h1v1h-1zM232 461h1v1h-1zM208 460h1v1h-1zM380 452h1v1h-1zM68 458h1v1h-1zM78 467h1v1h-1zM317 447h1v1h-1zM198 474h1v1h-1zM237 461h1v1h-1zM105 471h1v1h-1zM196 468h1v1h-1zM278 456h1v1h-1zM237 472h1v1h-1zM191 468h1v1h-1zM280 463h1v1h-1zM297 458h1v1h-1zM294 452h1v1h-1zM466 462h1v1h-1zM146 460h1v1h-1zM113 472h1v1h-1zM72 469h1v1h-1zM290 458h1v1h-1zM150 470h1v1h-1zM466 436h1v1h-1zM362 454h1v1h-1zM93 470h1v1h-1zM123 459h1v1h-1zM164 463h1v1h-1zM368 468h1v1h-1zM188 461h1v1h-1zM259 455h1v1h-1zM324 465h1v1h-1zM321 447h1v1h-1zM138 458h1v1h-1zM188 471h1v1h-1zM129 466h1v1h-1zM211 471h1v1h-1zM241 464h1v1h-1zM123 458h1v1h-1zM69 475h1v1h-1zM121 466h1v1h-1zM215 462h1v1h-1zM252 466h1v1h-1zM87 469h1v1h-1zM295 454h1v1h-1zM183 467h1v1h-1zM114 473h1v1h-1zM307 459h1v1h-1zM114 471h1v1h-1zM443 444h1v1h-1zM182 461h1v1h-1zM85 461h1v1h-1zM62 460h1v1h-1zM132 456h1v1h-1zM177 460h1v1h-1zM218 466h1v1h-1zM81 454h1v1h-1zM60 467h1v1h-1zM194 473h1v1h-1zM84 468h1v1h-1zM181 460h1v1h-1zM159 464h1v1h-1zM96 459h1v1h-1zM384 454h1v1h-1zM278 448h1v1h-1zM145 470h1v1h-1zM150 463h1v1h-1zM171 451h1v1h-1zM109 467h1v1h-1zM225 472h1v1h-1zM110 470h1v1h-1zM232 471h1v1h-1zM142 475h1v1h-1zM161 461h1v1h-1zM269 454h1v1h-1zM205 461h1v1h-1zM72 455h1v1h-1z" fill="#ff0000"/><path d="M257 459h1v1h-1zM177 461h1v1h-1zM437 450h1v1h-1zM136 467h1v1h-1zM273 442h1v1h-1zM373 445h1v1h-1zM410 451h1v1h-1zM161 443h1v1h-1zM157 452h1v1h-1zM63 469h1v1h-1zM267 458h1v1h-1zM63 476h1v1h-1zM78 457h1v1h-1zM150 454h1v1h-1zM207 456h1v1h-1zM203 454h1v1h-1zM173 452h1v1h-1zM223 429h1v1h-1zM312 440h1v1h-1zM337 458h1v1h-1zM73 475h1v1h-1zM347 439h1v1h-1zM68 471h1v1h-1zM96 473h1v1h-1zM65 469h1v1h-1zM370 463h1v1h-1zM267 459h1v1h-1zM78 468h1v1h-1zM91 454h1v1h-1zM180 461h1v1h-1zM158 453h1v1h-1zM110 424h1v1h-1zM86 456h1v1h-1zM105 451h1v1h-1zM137 467h1v1h-1zM339 440h1v1h-1zM371 457h1v1h-1zM221 449h1v1h-1zM172 455h1v1h-1zM210 465h1v1h-1zM318 457h1v1h-1zM333 441h1v1h-1zM262 465h1v1h-1zM61 464h1v1h-1zM86 473h1v1h-1zM232 470h1v1h-1zM402 438h1v1h-1zM374 449h1v1h-1zM308 441h1v1h-1zM150 469h1v1h-1zM240 468h1v1h-1zM137 471h1v1h-1zM127 461h1v1h-1zM290 454h1v1h-1zM375 459h1v1h-1zM141 471h1v1h-1zM370 456h1v1h-1zM476 444h1v1h-1zM88 462h1v1h-1zM246 465h1v1h-1zM132 472h1v1h-1zM363 463h1v1h-1zM84 467h1v1h-1zM135 453h1v1h-1zM297 452h1v1h-1zM187 463h1v1h-1zM349 439h1v1h-1zM187 471h1v1h-1zM93 464h1v1h-1zM187 462h1v1h-1zM273 456h1v1h-1zM474 393h1v1h-1zM150 455h1v1h-1zM271 465h1v1h-1zM95 459h1v1h-1zM266 447h1v1h-1zM224 465h1v1h-1zM329 451h1v1h-1zM251 454h1v1h-1zM284 462h1v1h-1zM206 453h1v1h-1zM480 440h1v1h-1zM194 451h1v1h-1zM316 451h1v1h-1zM77 462h1v1h-1zM294 441h1v1h-1zM343 469h1v1h-1zM266 444h1v1h-1zM71 476h1v1h-1zM290 448h1v1h-1zM184 446h1v1h-1zM283 463h1v1h-1zM339 422h1v1h-1zM343 462h1v1h-1zM268 470h1v1h-1zM184 453h1v1h-1zM222 454h1v1h-1zM412 461h1v1h-1zM168 452h1v1h-1zM90 461h1v1h-1zM75 472h1v1h-1zM310 462h1v1h-1zM185 473h1v1h-1zM354 441h1v1h-1zM331 449h1v1h-1zM302 455h1v1h-1zM247 457h1v1h-1zM213 463h1v1h-1zM391 437h1v1h-1zM123 475h1v1h-1zM126 459h1v1h-1zM151 473h1v1h-1zM353 454h1v1h-1zM232 444h1v1h-1zM331 427h1v1h-1zM192 461h1v1h-1zM328 451h1v1h-1zM214 446h1v1h-1zM451 451h1v1h-1zM131 477h1v1h-1zM236 441h1v1h-1zM63 465h1v1h-1zM469 419h1v1h-1zM265 456h1v1h-1zM472 429h1v1h-1zM259 449h1v1h-1zM322 437h1v1h-1zM356 426h1v1h-1zM196 442h1v1h-1zM73 460h1v1h-1zM70 463h1v1h-1zM383 432h1v1h-1zM363 425h1v1h-1zM294 443h1v1h-1zM407 438h1v1h-1zM70 481h1v1h-1zM230 464h1v1h-1zM167 461h1v1h-1zM171 459h1v1h-1zM89 456h1v1h-1zM77 464h1v1h-1zM261 462h1v1h-1zM304 456h1v1h-1zM80 455h1v1h-1zM81 471h1v1h-1zM169 448h1v1h-1zM130 457h1v1h-1zM111 473h1v1h-1zM349 425h1v1h-1zM276 468h1v1h-1zM130 453h1v1h-1zM59 465h1v1h-1zM293 460h1v1h-1zM315 468h1v1h-1zM178 449h1v1h-1zM204 442h1v1h-1zM430 454h1v1h-1zM90 473h1v1h-1zM147 472h1v1h-1zM248 449h1v1h-1zM303 446h1v1h-1zM105 456h1v1h-1zM98 461h1v1h-1zM441 463h1v1h-1zM395 458h1v1h-1zM90 477h1v1h-1zM109 453h1v1h-1zM190 449h1v1h-1zM370 454h1v1h-1zM401 441h1v1h-1zM99 442h1v1h-1zM370 454h1v1h-1zM95 472h1v1h-1zM99 475h1v1h-1zM105 459h1v1h-1zM368 449h1v1h-1zM126 468h1v1h-1zM71 470h1v1h-1zM420 439h1v1h-1zM141 469h1v1h-1zM232 456h1v1h-1zM164 459h1v1h-1zM391 445h1v1h-1zM235 464h1v1h-1zM135 461h1v1h-1zM256 449h1v1h-1zM188 447h1v1h-1zM463 446h1v1h-1zM394 443h1v1h-1zM136 453h1v1h-1zM406 456h1v1h-1zM127 454h1v1h-1zM122 468h1v1h-1zM392 452h1v1h-1zM69 467h1v1h-1zM161 467h1v1h-1zM396 450h1v1h-1zM123 467h1v1h-1zM223 465h1v1h-1zM218 446h1v1h-1zM347 453h1v1h-1zM157 454h1v1h-1zM141 458h1v1h-1zM310 448h1v1h-1zM56 458h1v1h-1zM259 449h1v1h-1zM249 459h1v1h-1zM239 470h1v1h-1zM388 435h1v1h-1zM242 469h1v1h-1zM425 440h1v1h-1zM198 450h1v1h-1zM203 424h1v1h-1zM390 452h1v1h-1zM420 446h1v1h-1zM222 461h1v1h-1zM78 461h1v1h-1zM274 459h1v1h-1zM425 440h1v1h-1zM86 464h1v1h-1zM249 452h1v1h-1zM171 451h1v1h-1zM155 459h1v1h-1zM236 467h1v1h-1zM87 458h1v1h-1zM103 467h1v1h-1zM276 441h1v1h-1zM359 461h1v1h-1zM128 451h1v1h-1zM357 449h1v1h-1zM244 454h1v1h-1zM419 440h1v1h-1zM251 456h1v1h-1zM221 454h1v1h-1zM143 461h1v1h-1zM267 464h1v1h-1zM402 452h1v1h-1zM203 452h1v1h-1zM337 451h1v1h-1zM118 454h1v1h-1zM138 459h1v1h-1zM69 464h1v1h-1zM276 468h1v1h-1zM71 477h1v1h-1zM190 453h1v1h-1zM353 457h1v1h-1zM223 463h1v1h-1zM85 459h1v1h-1zM288 454h1v1h-1zM277 450h1v1h-1zM185 471h1v1h-1zM116 466h1v1h-1zM220 465h1v1h-1zM220 467h1v1h-1zM430 460h1v1h-1zM131 458h1v1h-1zM102 474h1v1h-1zM126 476h1v1h-1zM59 465h1v1h-1zM206 444h1v1h-1zM179 458h1v1h-1zM160 459h1v1h-1zM230 455h1v1h-1zM222 462h1v1h-1zM190 449h1v1h-1zM335 446h1v1h-1zM278 452h1v1h-1zM183 468h1v1h-1zM329 461h1v1h-1zM352 434h1v1h-1zM199 463h1v1h-1zM250 462h1v1h-1zM384 449h1v1h-1zM295 451h1v1h-1zM315 457h1v1h-1zM379 430h1v1h-1zM62 451h1v1h-1zM82 454h1v1h-1zM145 460h1v1h-1zM140 471h1v1h-1zM254 460h1v1h-1zM58 453h1v1h-1zM83 472h1v1h-1zM290 449h1v1h-1zM136 460h1v1h-1zM166 453h1v1h-1zM229 453h1v1h-1zM313 448h1v1h-1zM291 461h1v1h-1zM77 467h1v1h-1zM453 456h1v1h-1zM66 481h1v1h-1zM355 464h1v1h-1zM208 446h1v1h-1zM95 455h1v1h-1zM135 452h1v1h-1zM393 453h1v1h-1zM255 449h1v1h-1zM88 471h1v1h-1zM202 454h1v1h-1zM249 464h1v1h-1zM181 464h1v1h-1zM192 459h1v1h-1zM292 454h1v1h-1zM115 467h1v1h-1zM150 465h1v1h-1zM99 462h1v1h-1zM250 463h1v1h-1zM145 455h1v1h-1zM458 436h1v1h-1zM71 464h1v1h-1zM152 461h1v1h-1zM387 463h1v1h-1zM131 461h1v1h-1zM267 437h1v1h-1zM115 473h1v1h-1zM124 465h1v1h-1zM374 450h1v1h-1zM134 471h1v1h-1zM375 456h1v1h-1zM222 462h1v1h-1zM117 470h1v1h-1zM239 450h1v1h-1zM304 459h1v1h-1zM304 465h1v1h-1zM151 459h1v1h-1zM407 445h1v1h-1zM236 468h1v1h-1zM100 456h1v1h-1zM165 462h1v1h-1zM371 456h1v1h-1zM298 459h1v1h-1zM201 449h1v1h-1zM312 459h1v1h-1zM63 454h1v1h-1zM122 447h1v1h-1zM458 418h1v1h-1zM434 450h1v1h-1zM321 451h1v1h-1zM183 466h1v1h-1zM315 462h1v1h-1zM276 455h1v1h-1zM433 415h1v1h-1zM261 448h1v1h-1zM58 456h1v1h-1zM226 467h1v1h-1zM275 462h1v1h-1zM197 457h1v1h-1zM365 416h1v1h-1zM116 454h1v1h-1zM245 463h1v1h-1zM94 452h1v1h-1zM440 460h1v1h-1zM232 467h1v1h-1zM237 438h1v1h-1zM86 458h1v1h-1zM170 472h1v1h-1zM272 452h1v1h-1zM407 428h1v1h-1zM378 450h1v1h-1zM282 418h1v1h-1zM146 454h1v1h-1zM250 445h1v1h-1zM397 441h1v1h-1zM378 469h1v1h-1zM423 453h1v1h-1zM423 453h1v1h-1zM316 446h1v1h-1zM277 439h1v1h-1zM328 457h1v1h-1zM100 464h1v1h-1zM266 465h1v1h-1zM182 474h1v1h-1zM171 445h1v1h-1zM376 441h1v1h-1zM478 455h1v1h-1zM69 460h1v1h-1zM86 462h1v1h-1zM116 475h1v1h-1zM345 447h1v1h-1zM75 450h1v1h-1zM439 451h1v1h-1zM339 449h1v1h-1zM123 462h1v1h-1zM483 437h1v1h-1zM263 449h1v1h-1zM123 460h1v1h-1zM187 455h1v1h-1zM386 438h1v1h-1zM247 440h1v1h-1zM226 435h1v1h-1zM123 451h1v1h-1zM172 454h1v1h-1zM67 468h1v1h-1zM320 444h1v1h-1zM261 454h1v1h-1zM239 458h1v1h-1zM183 458h1v1h-1zM242 467h1v1h-1zM468 450h1v1h-1zM222 439h1v1h-1zM116 463h1v1h-1zM232 418h1v1h-1zM105 454h1v1h-1zM181 452h1v1h-1zM92 461h1v1h-1zM63 483h1v1h-1zM308 458h1v1h-1zM486 452h1v1h-1zM138 455h1v1h-1zM160 460h1v1h-1zM83 478h1v1h-1zM407 456h1v1h-1zM246 446h1v1h-1zM202 451h1v1h-1zM393 439h1v1h-1zM214 455h1v1h-1zM94 472h1v1h-1zM322 434h1v1h-1zM147 455h1v1h-1zM259 447h1v1h-1zM222 450h1v1h-1zM115 465h1v1h-1zM155 462h1v1h-1zM229 449h1v1h-1zM324 448h1v1h-1zM492 464h1v1h-1zM115 463h1v1h-1zM239 462h1v1h-1zM237 451h1v1h-1zM152 445h1v1h-1zM212 455h1v1h-1zM415 459h1v1h-1zM294 457h1v1h-1zM200 455h1v1h-1zM274 453h1v1h-1zM81 462h1v1h-1zM98 461h1v1h-1zM281 459h1v1h-1zM89 455h1v1h-1zM442 421h1v1h-1zM201 461h1v1h-1zM82 475h1v1h-1zM152 456h1v1h-1zM92 455h1v1h-1zM165 466h1v1h-1zM169 451h1v1h-1zM216 465h1v1h-1zM124 435h1v1h-1zM409 415h1v1h-1zM65 455h1v1h-1zM182 450h1v1h-1zM72 456h1v1h-1zM206 466h1v1h-1zM134 459h1v1h-1zM145 466h1v1h-1zM283 466h1v1h-1zM310 446h1v1h-1zM163 443h1v1h-1zM193 456h1v1h-1zM191 470h1v1h-1zM126 443h1v1h-1zM281 450h1v1h-1zM268 455h1v1h-1zM94 449h1v1h-1zM116 475h1v1h-1zM143 465h1v1h-1zM114 455h1v1h-1zM102 463h1v1h-1zM235 456h1v1h-1zM213 450h1v1h-1zM139 452h1v1h-1zM275 458h1v1h-1zM225 461h1v1h-1zM283 443h1v1h-1zM75 465h1v1h-1zM421 446h1v1h-1zM204 465h1v1h-1zM342 450h1v1h-1zM236 459h1v1h-1zM382 437h1v1h-1zM103 466h1v1h-1zM122 476h1v1h-1zM326 459h1v1h-1zM408 439h1v1h-1zM216 444h1v1h-1zM284 467h1v1h-1zM86 472h1v1h-1zM95 457h1v1h-1zM98 472h1v1h-1zM245 461h1v1h-1zM222 448h1v1h-1zM238 457h1v1h-1zM138 470h1v1h-1zM65 453h1v1h-1zM269 453h1v1h-1zM184 470h1v1h-1zM366 440h1v1h-1zM124 463h1v1h-1zM427 447h1v1h-1zM451 424h1v1h-1zM56 476h1v1h-1zM352 416h1v1h-1zM219 448h1v1h-1zM119 474h1v1h-1zM269 454h1v1h-1zM410 442h1v1h-1zM240 467h1v1h-1zM320 422h1v1h-1zM69 473h1v1h-1zM320 448h1v1h-1zM127 440h1v1h-1zM149 466h1v1h-1zM136 470h1v1h-1zM114 462h1v1h-1zM259 448h1v1h-1zM399 454h1v1h-1zM354 464h1v1h-1zM367 458h1v1h-1zM95 463h1v1h-1zM377 461h1v1h-1zM192 446h1v1h-1zM322 444h1v1h-1zM59 457h1v1h-1zM143 467h1v1h-1zM216 448h1v1h-1zM136 476h1v1h-1zM150 453h1v1h-1zM348 445h1v1h-1zM83 460h1v1h-1zM345 446h1v1h-1zM333 451h1v1h-1zM452 452h1v1h-1zM112 463h1v1h-1zM60 459h1v1h-1zM156 469h1v1h-1zM315 445h1v1h-1zM130 457h1v1h-1zM66 476h1v1h-1zM60 454h1v1h-1zM159 452h1v1h-1zM138 475h1v1h-1zM60 472h1v1h-1zM66 468h1v1h-1zM121 458h1v1h-1zM200 451h1v1h-1zM93 476h1v1h-1zM330 458h1v1h-1zM337 450h1v1h-1zM325 465h1v1h-1zM122 468h1v1h-1zM178 460h1v1h-1zM199 461h1v1h-1zM232 459h1v1h-1zM197 455h1v1h-1zM188 455h1v1h-1zM378 445h1v1h-1zM427 447h1v1h-1zM186 463h1v1h-1zM110 473h1v1h-1zM219 447h1v1h-1zM293 465h1v1h-1zM68 478h1v1h-1zM154 463h1v1h-1zM80 471h1v1h-1zM81 458h1v1h-1zM140 453h1v1h-1zM98 459h1v1h-1zM129 467h1v1h-1zM243 446h1v1h-1zM118 469h1v1h-1zM329 446h1v1h-1zM73 466h1v1h-1zM374 456h1v1h-1zM244 458h1v1h-1zM395 459h1v1h-1zM178 459h1v1h-1zM160 471h1v1h-1zM198 460h1v1h-1zM191 462h1v1h-1zM202 453h1v1h-1zM265 452h1v1h-1zM223 461h1v1h-1zM321 448h1v1h-1zM57 458h1v1h-1zM114 456h1v1h-1zM319 466h1v1h-1zM388 442h1v1h-1zM280 454h1v1h-1zM270 445h1v1h-1zM148 475h1v1h-1zM408 463h1v1h-1zM102 479h1v1h-1zM328 456h1v1h-1zM186 460h1v1h-1zM112 456h1v1h-1zM95 467h1v1h-1zM132 458h1v1h-1zM62 460h1v1h-1zM371 454h1v1h-1zM126 453h1v1h-1zM346 453h1v1h-1zM88 475h1v1h-1zM248 466h1v1h-1zM271 454h1v1h-1zM266 465h1v1h-1zM313 468h1v1h-1zM261 457h1v1h-1zM94 456h1v1h-1zM90 456h1v1h-1zM91 450h1v1h-1zM64 458h1v1h-1zM164 457h1v1h-1zM81 452h1v1h-1zM93 461h1v1h-1zM218 470h1v1h-1zM156 451h1v1h-1zM116 467h1v1h-1zM184 459h1v1h-1zM280 467h1v1h-1zM84 462h1v1h-1zM227 455h1v1h-1zM78 476h1v1h-1zM285 470h1v1h-1zM81 469h1v1h-1zM273 449h1v1h-1zM84 463h1v1h-1zM126 470h1v1h-1zM431 442h1v1h-1zM190 465h1v1h-1zM304 461h1v1h-1zM100 448h1v1h-1zM266 442h1v1h-1zM263 453h1v1h-1zM395 450h1v1h-1zM170 454h1v1h-1zM187 468h1v1h-1zM115 460h1v1h-1zM368 461h1v1h-1zM204 448h1v1h-1zM86 454h1v1h-1zM336 454h1v1h-1zM172 460h1v1h-1zM156 467h1v1h-1zM344 428h1v1h-1zM272 464h1v1h-1zM120 463h1v1h-1zM234 467h1v1h-1zM293 461h1v1h-1zM74 468h1v1h-1zM100 469h1v1h-1zM155 459h1v1h-1zM96 462h1v1h-1zM131 469h1v1h-1zM335 447h1v1h-1zM380 469h1v1h-1zM403 435h1v1h-1zM311 462h1v1h-1zM427 451h1v1h-1zM311 461h1v1h-1zM267 449h1v1h-1zM381 448h1v1h-1zM79 458h1v1h-1zM175 473h1v1h-1zM73 459h1v1h-1zM477 453h1v1h-1zM171 451h1v1h-1zM287 450h1v1h-1zM66 468h1v1h-1zM271 450h1v1h-1zM114 452h1v1h-1zM109 470h1v1h-1zM132 441h1v1h-1zM120 468h1v1h-1zM103 462h1v1h-1zM162 470h1v1h-1zM134 476h1v1h-1zM203 459h1v1h-1zM182 460h1v1h-1zM404 449h1v1h-1zM258 469h1v1h-1zM59 457h1v1h-1zM194 463h1v1h-1zM256 460h1v1h-1zM58 473h1v1h-1zM158 475h1v1h-1zM171 453h1v1h-1zM287 442h1v1h-1zM260 456h1v1h-1zM365 453h1v1h-1zM175 456h1v1h-1zM251 454h1v1h-1zM378 444h1v1h-1zM91 455h1v1h-1zM333 455h1v1h-1zM289 449h1v1h-1zM265 451h1v1h-1zM362 467h1v1h-1zM226 464h1v1h-1zM358 444h1v1h-1zM378 444h1v1h-1zM67 464h1v1h-1zM251 464h1v1h-1zM86 468h1v1h-1zM271 464h1v1h-1zM343 435h1v1h-1zM422 441h1v1h-1zM165 454h1v1h-1zM207 461h1v1h-1zM384 465h1v1h-1zM130 468h1v1h-1zM284 447h1v1h-1zM179 469h1v1h-1zM392 463h1v1h-1zM137 462h1v1h-1zM404 458h1v1h-1zM392 457h1v1h-1zM164 456h1v1h-1zM126 459h1v1h-1zM386 451h1v1h-1zM412 449h1v1h-1zM141 451h1v1h-1zM132 457h1v1h-1zM400 418h1v1h-1zM218 461h1v1h-1zM86 478h1v1h-1zM247 464h1v1h-1zM81 469h1v1h-1zM272 443h1v1h-1zM415 449h1v1h-1zM101 448h1v1h-1zM241 456h1v1h-1zM105 449h1v1h-1zM279 443h1v1h-1zM119 463h1v1h-1zM144 456h1v1h-1zM108 454h1v1h-1zM200 471h1v1h-1zM77 472h1v1h-1zM93 466h1v1h-1zM158 451h1v1h-1zM92 458h1v1h-1zM187 453h1v1h-1zM95 478h1v1h-1zM245 462h1v1h-1zM184 457h1v1h-1zM72 477h1v1h-1zM162 460h1v1h-1zM383 449h1v1h-1zM359 465h1v1h-1zM171 461h1v1h-1zM279 428h1v1h-1zM100 471h1v1h-1zM141 472h1v1h-1zM83 463h1v1h-1zM414 455h1v1h-1zM195 453h1v1h-1zM164 459h1v1h-1zM315 448h1v1h-1zM120 463h1v1h-1zM220 468h1v1h-1zM68 456h1v1h-1zM100 470h1v1h-1zM87 463h1v1h-1zM140 457h1v1h-1zM213 433h1v1h-1zM228 448h1v1h-1zM212 456h1v1h-1zM69 454h1v1h-1zM116 455h1v1h-1zM312 446h1v1h-1zM324 463h1v1h-1zM105 475h1v1h-1zM438 424h1v1h-1zM139 462h1v1h-1zM189 443h1v1h-1zM164 451h1v1h-1zM250 454h1v1h-1zM169 449h1v1h-1zM144 451h1v1h-1zM176 453h1v1h-1zM209 464h1v1h-1zM125 469h1v1h-1zM330 459h1v1h-1zM241 440h1v1h-1zM95 453h1v1h-1zM242 465h1v1h-1zM257 471h1v1h-1zM180 470h1v1h-1zM127 466h1v1h-1zM211 461h1v1h-1zM131 476h1v1h-1zM303 464h1v1h-1zM116 467h1v1h-1zM186 471h1v1h-1zM411 446h1v1h-1zM76 458h1v1h-1zM292 464h1v1h-1zM191 465h1v1h-1zM98 459h1v1h-1zM172 467h1v1h-1zM237 452h1v1h-1zM226 468h1v1h-1zM168 454h1v1h-1zM334 448h1v1h-1zM64 477h1v1h-1zM283 461h1v1h-1zM410 462h1v1h-1zM173 435h1v1h-1zM378 439h1v1h-1zM224 469h1v1h-1zM268 454h1v1h-1zM143 456h1v1h-1zM102 474h1v1h-1zM65 454h1v1h-1zM155 460h1v1h-1zM259 454h1v1h-1zM104 459h1v1h-1zM457 461h1v1h-1zM254 462h1v1h-1zM195 449h1v1h-1zM230 470h1v1h-1zM192 465h1v1h-1zM89 461h1v1h-1zM144 454h1v1h-1zM230 456h1v1h-1zM71 471h1v1h-1zM115 454h1v1h-1zM110 444h1v1h-1zM81 473h1v1h-1zM174 454h1v1h-1zM346 453h1v1h-1zM145 455h1v1h-1zM313 456h1v1h-1zM206 458h1v1h-1zM352 449h1v1h-1zM108 464h1v1h-1zM225 450h1v1h-1zM320 455h1v1h-1zM412 445h1v1h-1zM346 442h1v1h-1zM213 457h1v1h-1zM281 432h1v1h-1zM79 458h1v1h-1zM188 459h1v1h-1zM422 452h1v1h-1zM340 452h1v1h-1zM321 453h1v1h-1zM56 472h1v1h-1zM148 454h1v1h-1zM408 446h1v1h-1zM502 444h1v1h-1zM336 453h1v1h-1zM73 463h1v1h-1zM239 459h1v1h-1zM112 446h1v1h-1zM213 435h1v1h-1zM381 450h1v1h-1zM129 463h1v1h-1zM323 448h1v1h-1zM268 447h1v1h-1zM254 448h1v1h-1zM265 461h1v1h-1zM254 467h1v1h-1zM250 447h1v1h-1zM188 456h1v1h-1zM264 464h1v1h-1zM380 456h1v1h-1zM192 444h1v1h-1zM111 455h1v1h-1zM98 472h1v1h-1zM325 445h1v1h-1zM351 453h1v1h-1zM256 459h1v1h-1zM320 446h1v1h-1zM261 434h1v1h-1zM270 448h1v1h-1zM243 444h1v1h-1zM183 467h1v1h-1zM141 461h1v1h-1zM152 458h1v1h-1zM287 448h1v1h-1zM346 449h1v1h-1zM112 463h1v1h-1zM325 457h1v1h-1zM149 457h1v1h-1zM273 469h1v1h-1zM212 436h1v1h-1zM73 461h1v1h-1zM179 448h1v1h-1zM136 458h1v1h-1zM76 476h1v1h-1zM300 456h1v1h-1zM123 451h1v1h-1zM426 464h1v1h-1zM169 437h1v1h-1zM291 466h1v1h-1zM107 476h1v1h-1zM402 439h1v1h-1zM290 447h1v1h-1zM262 453h1v1h-1zM475 440h1v1h-1zM353 466h1v1h-1zM426 454h1v1h-1zM270 464h1v1h-1zM104 470h1v1h-1zM231 444h1v1h-1zM74 470h1v1h-1zM312 444h1v1h-1zM106 453h1v1h-1zM106 451h1v1h-1zM309 445h1v1h-1zM434 450h1v1h-1zM173 469h1v1h-1zM411 434h1v1h-1zM199 467h1v1h-1zM162 461h1v1h-1zM68 459h1v1h-1zM110 465h1v1h-1zM56 469h1v1h-1zM95 468h1v1h-1zM193 439h1v1h-1zM299 456h1v1h-1zM138 464h1v1h-1zM170 459h1v1h-1zM241 449h1v1h-1zM152 456h1v1h-1zM130 473h1v1h-1zM116 474h1v1h-1zM80 472h1v1h-1zM74 472h1v1h-1zM65 470h1v1h-1zM58 457h1v1h-1zM252 464h1v1h-1zM438 432h1v1h-1zM316 455h1v1h-1zM194 473h1v1h-1zM60 466h1v1h-1zM174 459h1v1h-1zM184 460h1v1h-1zM103 472h1v1h-1zM261 470h1v1h-1zM224 462h1v1h-1zM259 466h1v1h-1zM103 464h1v1h-1zM147 463h1v1h-1zM267 442h1v1h-1zM310 460h1v1h-1zM369 439h1v1h-1zM66 464h1v1h-1zM107 457h1v1h-1zM97 443h1v1h-1zM130 457h1v1h-1zM200 448h1v1h-1zM77 468h1v1h-1zM135 465h1v1h-1zM247 460h1v1h-1zM195 449h1v1h-1zM422 455h1v1h-1zM77 469h1v1h-1zM62 480h1v1h-1zM194 452h1v1h-1zM376 447h1v1h-1zM242 453h1v1h-1zM261 446h1v1h-1zM405 442h1v1h-1zM85 460h1v1h-1zM201 456h1v1h-1zM155 457h1v1h-1zM147 454h1v1h-1zM234 452h1v1h-1zM105 468h1v1h-1zM311 464h1v1h-1zM347 437h1v1h-1zM359 456h1v1h-1zM197 455h1v1h-1zM68 458h1v1h-1zM74 466h1v1h-1zM70 479h1v1h-1zM129 466h1v1h-1zM334 455h1v1h-1zM406 463h1v1h-1zM244 456h1v1h-1zM172 460h1v1h-1zM403 454h1v1h-1zM208 459h1v1h-1zM81 452h1v1h-1zM72 467h1v1h-1zM421 446h1v1h-1zM160 457h1v1h-1zM175 448h1v1h-1zM299 441h1v1h-1zM389 450h1v1h-1zM319 440h1v1h-1zM224 452h1v1h-1zM214 452h1v1h-1zM140 459h1v1h-1zM88 459h1v1h-1zM460 454h1v1h-1zM179 447h1v1h-1zM257 447h1v1h-1zM277 449h1v1h-1zM126 451h1v1h-1zM395 459h1v1h-1zM337 464h1v1h-1zM190 468h1v1h-1zM75 448h1v1h-1zM220 453h1v1h-1zM412 428h1v1h-1zM239 451h1v1h-1zM189 461h1v1h-1zM302 461h1v1h-1zM90 468h1v1h-1zM318 457h1v1h-1zM59 464h1v1h-1zM278 440h1v1h-1zM160 457h1v1h-1zM286 461h1v1h-1zM155 452h1v1h-1zM355 446h1v1h-1zM309 462h1v1h-1zM202 447h1v1h-1zM287 459h1v1h-1zM201 470h1v1h-1zM84 470h1v1h-1zM109 458h1v1h-1zM168 471h1v1h-1zM130 474h1v1h-1zM392 450h1v1h-1zM186 468h1v1h-1zM175 458h1v1h-1zM436 429h1v1h-1zM91 451h1v1h-1zM118 454h1v1h-1zM377 466h1v1h-1zM229 455h1v1h-1zM84 461h1v1h-1zM251 433h1v1h-1zM238 459h1v1h-1zM340 434h1v1h-1zM200 459h1v1h-1zM121 454h1v1h-1zM204 463h1v1h-1zM351 453h1v1h-1zM139 459h1v1h-1zM185 449h1v1h-1zM297 457h1v1h-1zM169 473h1v1h-1zM94 475h1v1h-1zM199 449h1v1h-1zM436 457h1v1h-1zM214 469h1v1h-1zM350 434h1v1h-1zM219 456h1v1h-1zM364 408h1v1h-1zM170 455h1v1h-1zM63 475h1v1h-1zM267 463h1v1h-1zM65 475h1v1h-1zM348 442h1v1h-1zM228 454h1v1h-1zM57 456h1v1h-1zM115 458h1v1h-1zM420 442h1v1h-1zM316 448h1v1h-1zM86 470h1v1h-1zM377 450h1v1h-1zM408 438h1v1h-1zM248 463h1v1h-1zM120 454h1v1h-1zM269 443h1v1h-1zM66 467h1v1h-1zM265 464h1v1h-1zM193 471h1v1h-1zM79 473h1v1h-1zM442 432h1v1h-1zM314 452h1v1h-1zM355 464h1v1h-1zM184 463h1v1h-1zM481 408h1v1h-1zM98 461h1v1h-1zM227 462h1v1h-1zM218 464h1v1h-1zM72 470h1v1h-1zM248 449h1v1h-1zM305 459h1v1h-1zM155 472h1v1h-1zM185 461h1v1h-1zM333 439h1v1h-1zM92 457h1v1h-1zM176 454h1v1h-1zM317 444h1v1h-1zM146 465h1v1h-1zM125 476h1v1h-1zM229 461h1v1h-1zM234 408h1v1h-1zM176 459h1v1h-1zM378 454h1v1h-1zM106 457h1v1h-1zM93 455h1v1h-1zM79 473h1v1h-1zM220 449h1v1h-1zM352 437h1v1h-1zM261 449h1v1h-1zM220 451h1v1h-1zM86 471h1v1h-1zM159 453h1v1h-1zM380 436h1v1h-1zM332 454h1v1h-1zM132 448h1v1h-1zM165 447h1v1h-1zM362 452h1v1h-1zM125 470h1v1h-1zM92 467h1v1h-1zM115 465h1v1h-1zM200 465h1v1h-1zM386 463h1v1h-1zM197 453h1v1h-1zM167 471h1v1h-1zM328 446h1v1h-1zM92 467h1v1h-1zM192 458h1v1h-1zM331 445h1v1h-1zM190 437h1v1h-1zM168 467h1v1h-1zM119 471h1v1h-1zM86 468h1v1h-1zM134 456h1v1h-1zM201 430h1v1h-1zM391 436h1v1h-1zM69 459h1v1h-1zM63 469h1v1h-1zM73 450h1v1h-1zM72 474h1v1h-1zM325 458h1v1h-1zM236 471h1v1h-1zM273 448h1v1h-1zM388 430h1v1h-1zM278 442h1v1h-1zM377 464h1v1h-1zM367 437h1v1h-1zM81 463h1v1h-1zM267 428h1v1h-1zM152 454h1v1h-1zM232 453h1v1h-1zM65 477h1v1h-1zM123 472h1v1h-1zM304 442h1v1h-1zM246 468h1v1h-1zM177 458h1v1h-1z" fill="#00ff00"/><path d="M298 449h1v1h-1zM104 462h1v1h-1zM314 441h1v1h-1zM120 461h1v1h-1zM373 426h1v1h-1zM141 445h1v1h-1zM373 444h1v1h-1zM115 446h1v1h-1zM107 452h1v1h-1zM476 445h1v1h-1zM315 448h1v1h-1zM305 421h1v1h-1zM119 453h1v1h-1zM168 458h1v1h-1zM218 436h1v1h-1zM196 470h1v1h-1zM108 460h1v1h-1zM168 455h1v1h-1zM201 443h1v1h-1zM74 451h1v1h-1zM94 438h1v1h-1zM337 448h1v1h-1zM153 463h1v1h-1zM348 420h1v1h-1zM193 451h1v1h-1zM119 450h1v1h-1zM441 433h1v1h-1zM238 440h1v1h-1zM76 473h1v1h-1zM305 444h1v1h-1zM139 462h1v1h-1zM175 424h1v1h-1zM193 466h1v1h-1zM210 446h1v1h-1zM91 461h1v1h-1zM267 438h1v1h-1zM134 461h1v1h-1zM180 467h1v1h-1zM354 457h1v1h-1zM430 438h1v1h-1zM126 459h1v1h-1zM246 449h1v1h-1zM222 466h1v1h-1zM67 437h1v1h-1zM308 457h1v1h-1zM334 460h1v1h-1zM168 439h1v1h-1zM145 441h1v1h-1zM138 451h1v1h-1zM427 448h1v1h-1zM348 456h1v1h-1zM223 436h1v1h-1zM66 475h1v1h-1zM408 445h1v1h-1zM293 467h1v1h-1zM262 464h1v1h-1zM167 472h1v1h-1zM388 451h1v1h-1zM339 440h1v1h-1zM383 442h1v1h-1zM181 435h1v1h-1zM242 456h1v1h-1zM279 425h1v1h-1zM193 440h1v1h-1zM441 437h1v1h-1zM365 427h1v1h-1zM316 435h1v1h-1zM267 450h1v1h-1zM200 455h1v1h-1zM191 446h1v1h-1zM60 445h1v1h-1zM188 422h1v1h-1zM305 407h1v1h-1zM237 440h1v1h-1zM426 435h1v1h-1zM312 456h1v1h-1zM206 441h1v1h-1zM150 456h1v1h-1zM148 442h1v1h-1zM158 438h1v1h-1zM75 477h1v1h-1zM235 465h1v1h-1zM339 446h1v1h-1zM421 442h1v1h-1zM261 441h1v1h-1zM179 445h1v1h-1zM337 429h1v1h-1zM222 450h1v1h-1zM241 441h1v1h-1zM173 450h1v1h-1zM176 464h1v1h-1zM237 436h1v1h-1zM67 470h1v1h-1zM65 432h1v1h-1zM173 436h1v1h-1zM172 460h1v1h-1zM263 451h1v1h-1zM287 433h1v1h-1zM253 455h1v1h-1zM265 427h1v1h-1zM198 453h1v1h-1zM170 460h1v1h-1zM164 439h1v1h-1zM424 434h1v1h-1zM83 441h1v1h-1zM317 456h1v1h-1zM151 449h1v1h-1zM83 466h1v1h-1zM87 443h1v1h-1zM117 466h1v1h-1zM213 460h1v1h-1zM205 440h1v1h-1zM126 444h1v1h-1zM312 467h1v1h-1zM318 426h1v1h-1zM227 466h1v1h-1zM333 460h1v1h-1zM423 448h1v1h-1zM66 472h1v1h-1zM238 465h1v1h-1zM247 468h1v1h-1zM329 450h1v1h-1zM194 442h1v1h-1zM203 456h1v1h-1zM365 455h1v1h-1zM127 446h1v1h-1zM330 442h1v1h-1zM251 446h1v1h-1zM74 453h1v1h-1zM102 456h1v1h-1zM366 449h1v1h-1zM267 450h1v1h-1zM324 450h1v1h-1zM116 443h1v1h-1zM276 460h1v1h-1zM95 476h1v1h-1zM96 449h1v1h-1zM291 444h1v1h-1zM369 457h1v1h-1zM258 461h1v1h-1zM206 438h1v1h-1zM221 464h1v1h-1zM217 449h1v1h-1zM266 424h1v1h-1zM227 468h1v1h-1zM212 458h1v1h-1zM312 455h1v1h-1zM223 465h1v1h-1zM221 455h1v1h-1zM312 437h1v1h-1zM63 472h1v1h-1zM136 443h1v1h-1zM140 450h1v1h-1zM244 396h1v1h-1zM480 440h1v1h-1zM317 461h1v1h-1zM184 456h1v1h-1zM101 452h1v1h-1zM211 449h1v1h-1zM218 438h1v1h-1zM173 436h1v1h-1zM131 462h1v1h-1zM155 471h1v1h-1zM219 458h1v1h-1zM229 462h1v1h-1zM190 462h1v1h-1zM370 455h1v1h-1zM457 421h1v1h-1zM190 430h1v1h-1zM73 456h1v1h-1zM156 472h1v1h-1zM110 451h1v1h-1zM164 450h1v1h-1zM318 462h1v1h-1zM229 447h1v1h-1zM108 472h1v1h-1zM206 447h1v1h-1zM310 444h1v1h-1zM277 446h1v1h-1zM177 426h1v1h-1zM295 452h1v1h-1zM229 455h1v1h-1zM145 461h1v1h-1zM357 454h1v1h-1zM216 471h1v1h-1zM368 447h1v1h-1zM282 461h1v1h-1zM203 440h1v1h-1zM96 472h1v1h-1zM160 454h1v1h-1zM173 456h1v1h-1zM165 457h1v1h-1zM311 441h1v1h-1zM385 462h1v1h-1zM191 426h1v1h-1zM169 438h1v1h-1zM156 456h1v1h-1zM77 463h1v1h-1zM341 458h1v1h-1zM277 435h1v1h-1zM93 475h1v1h-1zM191 454h1v1h-1zM144 437h1v1h-1zM132 438h1v1h-1zM264 453h1v1h-1zM267 435h1v1h-1zM362 425h1v1h-1zM269 452h1v1h-1zM143 464h1v1h-1zM384 411h1v1h-1zM57 480h1v1h-1zM253 461h1v1h-1zM258 456h1v1h-1zM278 465h1v1h-1zM165 465h1v1h-1zM342 431h1v1h-1zM281 424h1v1h-1zM423 443h1v1h-1zM237 430h1v1h-1zM155 437h1v1h-1zM340 435h1v1h-1zM359 426h1v1h-1zM56 446h1v1h-1zM434 433h1v1h-1zM315 429h1v1h-1zM87 456h1v1h-1zM271 440h1v1h-1zM167 434h1v1h-1zM264 438h1v1h-1zM101 467h1v1h-1zM152 449h1v1h-1zM274 456h1v1h-1zM334 441h1v1h-1zM149 435h1v1h-1zM138 440h1v1h-1zM443 437h1v1h-1zM342 440h1v1h-1zM75 447h1v1h-1zM202 448h1v1h-1zM337 465h1v1h-1zM201 435h1v1h-1zM411 437h1v1h-1zM175 434h1v1h-1zM232 464h1v1h-1zM153 461h1v1h-1zM314 447h1v1h-1zM344 443h1v1h-1zM497 448h1v1h-1zM202 437h1v1h-1zM84 456h1v1h-1zM275 454h1v1h-1zM115 451h1v1h-1zM287 455h1v1h-1zM141 453h1v1h-1zM84 465h1v1h-1zM179 431h1v1h-1zM90 461h1v1h-1zM369 463h1v1h-1zM282 437h1v1h-1zM74 461h1v1h-1zM330 448h1v1h-1zM335 446h1v1h-1zM265 461h1v1h-1zM335 436h1v1h-1zM320 430h1v1h-1zM241 416h1v1h-1zM213 447h1v1h-1zM97 473h1v1h-1zM269 439h1v1h-1zM181 447h1v1h-1zM272 441h1v1h-1zM213 417h1v1h-1zM402 448h1v1h-1zM279 432h1v1h-1zM168 464h1v1h-1zM232 451h1v1h-1zM392 458h1v1h-1zM347 434h1v1h-1zM208 454h1v1h-1zM117 452h1v1h-1zM207 435h1v1h-1zM231 427h1v1h-1zM139 439h1v1h-1zM69 466h1v1h-1zM422 464h1v1h-1zM193 458h1v1h-1zM460 446h1v1h-1zM142 465h1v1h-1zM84 469h1v1h-1zM120 427h1v1h-1zM391 440h1v1h-1zM96 450h1v1h-1zM147 444h1v1h-1zM362 416h1v1h-1zM187 461h1v1h-1zM196 452h1v1h-1zM62 440h1v1h-1zM113 470h1v1h-1zM67 460h1v1h-1zM61 459h1v1h-1zM311 434h1v1h-1zM283 462h1v1h-1zM314 451h1v1h-1zM322 445h1v1h-1zM233 457h1v1h-1zM159 439h1v1h-1zM209 433h1v1h-1zM281 455h1v1h-1zM384 421h1v1h-1zM237 461h1v1h-1zM185 467h1v1h-1zM311 439h1v1h-1zM56 476h1v1h-1zM333 434h1v1h-1zM350 456h1v1h-1zM364 441h1v1h-1zM454 426h1v1h-1zM251 439h1v1h-1zM340 446h1v1h-1zM235 455h1v1h-1zM289 460h1v1h-1zM69 438h1v1h-1zM398 448h1v1h-1zM140 456h1v1h-1zM63 468h1v1h-1zM300 441h1v1h-1zM60 463h1v1h-1zM407 416h1v1h-1zM179 427h1v1h-1zM347 447h1v1h-1zM143 382h1v1h-1zM195 448h1v1h-1zM311 437h1v1h-1zM137 455h1v1h-1zM110 461h1v1h-1zM283 430h1v1h-1zM186 448h1v1h-1zM282 444h1v1h-1zM233 442h1v1h-1zM109 471h1v1h-1zM82 477h1v1h-1zM89 455h1v1h-1zM148 469h1v1h-1zM287 449h1v1h-1zM181 459h1v1h-1zM300 444h1v1h-1zM424 384h1v1h-1zM166 438h1v1h-1zM258 438h1v1h-1zM279 460h1v1h-1zM327 444h1v1h-1zM76 452h1v1h-1zM336 448h1v1h-1zM122 453h1v1h-1zM337 433h1v1h-1zM86 443h1v1h-1zM90 454h1v1h-1zM184 448h1v1h-1zM94 458h1v1h-1zM358 462h1v1h-1zM171 449h1v1h-1zM348 424h1v1h-1zM306 448h1v1h-1zM68 442h1v1h-1zM365 433h1v1h-1zM140 441h1v1h-1zM84 444h1v1h-1zM325 434h1v1h-1zM311 434h1v1h-1zM132 458h1v1h-1zM143 437h1v1h-1zM259 445h1v1h-1zM163 447h1v1h-1zM255 434h1v1h-1zM349 430h1v1h-1zM95 456h1v1h-1zM402 432h1v1h-1zM232 449h1v1h-1zM202 451h1v1h-1zM420 451h1v1h-1zM290 436h1v1h-1zM140 460h1v1h-1zM96 458h1v1h-1zM390 448h1v1h-1zM386 438h1v1h-1zM391 446h1v1h-1zM272 459h1v1h-1zM70 460h1v1h-1zM145 442h1v1h-1zM217 437h1v1h-1zM107 451h1v1h-1zM114 450h1v1h-1zM329 420h1v1h-1zM277 451h1v1h-1zM178 458h1v1h-1zM98 454h1v1h-1zM271 450h1v1h-1zM330 451h1v1h-1zM223 448h1v1h-1zM141 453h1v1h-1zM227 422h1v1h-1zM366 444h1v1h-1zM368 433h1v1h-1zM160 461h1v1h-1zM209 459h1v1h-1zM173 440h1v1h-1zM178 456h1v1h-1zM410 448h1v1h-1zM68 447h1v1h-1zM134 459h1v1h-1zM313 431h1v1h-1zM321 461h1v1h-1zM254 437h1v1h-1zM91 465h1v1h-1zM437 437h1v1h-1zM149 429h1v1h-1zM231 429h1v1h-1zM269 445h1v1h-1zM199 468h1v1h-1zM385 400h1v1h-1zM169 454h1v1h-1zM130 447h1v1h-1zM67 468h1v1h-1zM311 467h1v1h-1zM179 440h1v1h-1zM373 462h1v1h-1zM251 448h1v1h-1zM337 445h1v1h-1zM115 454h1v1h-1zM233 462h1v1h-1zM290 441h1v1h-1zM315 453h1v1h-1zM235 453h1v1h-1zM339 448h1v1h-1zM406 460h1v1h-1zM205 456h1v1h-1zM260 449h1v1h-1zM82 453h1v1h-1zM274 460h1v1h-1zM443 401h1v1h-1zM65 455h1v1h-1zM112 441h1v1h-1zM237 433h1v1h-1zM175 444h1v1h-1zM205 461h1v1h-1zM119 454h1v1h-1zM293 415h1v1h-1zM315 434h1v1h-1zM191 451h1v1h-1zM371 463h1v1h-1zM285 462h1v1h-1zM319 451h1v1h-1zM255 448h1v1h-1zM183 450h1v1h-1zM411 439h1v1h-1zM164 453h1v1h-1zM155 429h1v1h-1zM232 456h1v1h-1zM139 452h1v1h-1zM195 448h1v1h-1zM166 450h1v1h-1zM331 429h1v1h-1zM197 451h1v1h-1zM200 440h1v1h-1zM377 419h1v1h-1zM82 447h1v1h-1zM160 446h1v1h-1zM332 450h1v1h-1zM183 428h1v1h-1zM277 449h1v1h-1zM255 457h1v1h-1zM195 450h1v1h-1zM124 449h1v1h-1zM207 458h1v1h-1zM165 435h1v1h-1zM162 466h1v1h-1zM234 458h1v1h-1zM359 452h1v1h-1zM310 463h1v1h-1zM67 435h1v1h-1zM459 454h1v1h-1zM161 469h1v1h-1zM343 432h1v1h-1zM105 442h1v1h-1zM387 451h1v1h-1zM164 439h1v1h-1zM88 467h1v1h-1zM123 439h1v1h-1zM301 441h1v1h-1zM302 438h1v1h-1zM400 449h1v1h-1zM324 453h1v1h-1zM316 439h1v1h-1zM122 435h1v1h-1zM205 459h1v1h-1zM214 441h1v1h-1zM370 442h1v1h-1zM84 444h1v1h-1zM355 436h1v1h-1zM205 441h1v1h-1zM206 451h1v1h-1zM135 460h1v1h-1zM363 461h1v1h-1zM192 462h1v1h-1zM148 465h1v1h-1zM341 435h1v1h-1zM119 473h1v1h-1zM216 451h1v1h-1zM319 445h1v1h-1zM226 452h1v1h-1zM454 418h1v1h-1zM156 468h1v1h-1zM227 461h1v1h-1zM387 443h1v1h-1zM238 468h1v1h-1zM146 445h1v1h-1zM410 437h1v1h-1zM233 437h1v1h-1zM329 453h1v1h-1zM369 441h1v1h-1zM235 467h1v1h-1zM97 450h1v1h-1zM393 430h1v1h-1zM381 410h1v1h-1zM338 416h1v1h-1zM371 450h1v1h-1zM249 468h1v1h-1zM107 456h1v1h-1zM304 454h1v1h-1zM242 447h1v1h-1zM337 446h1v1h-1zM417 438h1v1h-1zM446 442h1v1h-1zM153 453h1v1h-1zM108 438h1v1h-1zM68 480h1v1h-1zM59 447h1v1h-1zM306 438h1v1h-1zM158 455h1v1h-1zM151 450h1v1h-1zM253 466h1v1h-1zM400 447h1v1h-1zM70 460h1v1h-1zM246 438h1v1h-1zM316 445h1v1h-1zM304 436h1v1h-1zM376 451h1v1h-1zM275 438h1v1h-1zM372 451h1v1h-1zM231 443h1v1h-1zM338 455h1v1h-1zM200 438h1v1h-1zM381 435h1v1h-1zM267 439h1v1h-1zM234 447h1v1h-1zM153 451h1v1h-1zM266 455h1v1h-1zM270 438h1v1h-1zM376 459h1v1h-1zM102 455h1v1h-1zM202 453h1v1h-1zM162 436h1v1h-1zM199 423h1v1h-1zM196 458h1v1h-1zM313 461h1v1h-1zM165 439h1v1h-1zM121 464h1v1h-1zM81 385h1v1h-1zM234 453h1v1h-1zM169 463h1v1h-1zM184 445h1v1h-1zM263 470h1v1h-1zM173 458h1v1h-1zM61 446h1v1h-1zM318 460h1v1h-1zM356 432h1v1h-1zM234 461h1v1h-1zM67 450h1v1h-1zM94 458h1v1h-1zM274 423h1v1h-1zM229 465h1v1h-1zM343 446h1v1h-1zM321 437h1v1h-1zM189 450h1v1h-1zM330 437h1v1h-1zM87 445h1v1h-1zM131 468h1v1h-1zM378 410h1v1h-1zM116 440h1v1h-1zM213 452h1v1h-1zM121 444h1v1h-1zM113 462h1v1h-1zM418 454h1v1h-1zM349 438h1v1h-1zM229 428h1v1h-1zM399 445h1v1h-1zM230 454h1v1h-1zM99 469h1v1h-1zM418 436h1v1h-1zM133 460h1v1h-1zM91 452h1v1h-1zM246 433h1v1h-1zM283 444h1v1h-1zM299 438h1v1h-1zM304 452h1v1h-1zM190 459h1v1h-1zM198 440h1v1h-1zM89 440h1v1h-1zM341 444h1v1h-1zM409 440h1v1h-1zM150 434h1v1h-1zM245 445h1v1h-1zM139 436h1v1h-1zM82 440h1v1h-1zM273 458h1v1h-1zM158 430h1v1h-1zM119 468h1v1h-1zM453 418h1v1h-1zM261 435h1v1h-1zM405 430h1v1h-1zM493 421h1v1h-1zM140 448h1v1h-1zM82 443h1v1h-1zM172 445h1v1h-1zM95 442h1v1h-1zM404 430h1v1h-1zM271 456h1v1h-1zM139 443h1v1h-1zM90 446h1v1h-1zM472 438h1v1h-1zM270 436h1v1h-1zM297 433h1v1h-1zM215 455h1v1h-1zM171 468h1v1h-1zM492 444h1v1h-1zM465 431h1v1h-1zM74 447h1v1h-1zM232 436h1v1h-1zM227 447h1v1h-1zM227 462h1v1h-1zM171 437h1v1h-1zM165 459h1v1h-1zM82 458h1v1h-1zM322 419h1v1h-1zM207 463h1v1h-1zM105 451h1v1h-1zM64 465h1v1h-1zM426 437h1v1h-1zM299 436h1v1h-1zM60 472h1v1h-1zM353 423h1v1h-1zM350 412h1v1h-1zM125 441h1v1h-1zM309 435h1v1h-1zM91 467h1v1h-1zM93 441h1v1h-1zM63 460h1v1h-1zM121 453h1v1h-1zM369 432h1v1h-1zM59 441h1v1h-1zM295 436h1v1h-1zM84 456h1v1h-1zM64 475h1v1h-1zM58 469h1v1h-1zM89 452h1v1h-1zM123 450h1v1h-1zM297 454h1v1h-1zM318 432h1v1h-1zM134 468h1v1h-1zM152 428h1v1h-1zM334 468h1v1h-1zM285 444h1v1h-1zM127 473h1v1h-1zM118 471h1v1h-1zM102 455h1v1h-1zM108 448h1v1h-1zM235 425h1v1h-1zM164 450h1v1h-1zM182 430h1v1h-1zM156 445h1v1h-1zM355 421h1v1h-1zM217 457h1v1h-1zM163 464h1v1h-1zM110 457h1v1h-1zM412 423h1v1h-1zM392 425h1v1h-1zM444 449h1v1h-1zM301 453h1v1h-1zM268 452h1v1h-1zM225 448h1v1h-1zM195 439h1v1h-1zM62 462h1v1h-1zM133 453h1v1h-1zM173 450h1v1h-1zM88 475h1v1h-1zM69 445h1v1h-1zM219 453h1v1h-1zM147 457h1v1h-1zM105 454h1v1h-1zM232 464h1v1h-1zM146 464h1v1h-1zM102 443h1v1h-1zM155 468h1v1h-1zM175 452h1v1h-1zM60 471h1v1h-1zM107 456h1v1h-1zM68 453h1v1h-1zM311 439h1v1h-1zM111 468h1v1h-1zM233 434h1v1h-1zM139 437h1v1h-1zM145 445h1v1h-1zM147 466h1v1h-1zM264 457h1v1h-1zM324 440h1v1h-1zM176 446h1v1h-1zM67 465h1v1h-1zM303 437h1v1h-1zM252 439h1v1h-1zM273 468h1v1h-1zM358 439h1v1h-1zM261 444h1v1h-1zM124 442h1v1h-1zM124 463h1v1h-1zM97 471h1v1h-1zM68 448h1v1h-1zM301 456h1v1h-1zM207 441h1v1h-1zM144 444h1v1h-1zM110 446h1v1h-1zM163 439h1v1h-1zM229 451h1v1h-1zM175 466h1v1h-1zM183 445h1v1h-1zM93 435h1v1h-1zM281 448h1v1h-1zM212 447h1v1h-1zM89 442h1v1h-1zM421 442h1v1h-1zM186 432h1v1h-1zM64 469h1v1h-1zM254 442h1v1h-1zM172 440h1v1h-1zM150 456h1v1h-1zM126 461h1v1h-1zM323 456h1v1h-1zM379 415h1v1h-1zM215 456h1v1h-1zM283 454h1v1h-1zM330 451h1v1h-1zM74 456h1v1h-1zM257 458h1v1h-1zM122 458h1v1h-1zM151 452h1v1h-1zM98 446h1v1h-1zM96 466h1v1h-1zM186 437h1v1h-1zM439 433h1v1h-1zM130 467h1v1h-1zM126 458h1v1h-1zM235 446h1v1h-1zM208 458h1v1h-1zM310 460h1v1h-1zM124 444h1v1h-1zM197 468h1v1h-1zM324 459h1v1h-1zM96 473h1v1h-1zM461 426h1v1h-1zM213 435h1v1h-1zM131 433h1v1h-1zM145 470h1v1h-1zM280 456h1v1h-1zM372 434h1v1h-1zM92 460h1v1h-1zM150 440h1v1h-1zM377 426h1v1h-1zM62 479h1v1h-1zM83 441h1v1h-1zM248 463h1v1h-1zM356 436h1v1h-1zM292 434h1v1h-1zM141 430h1v1h-1zM151 446h1v1h-1zM275 452h1v1h-1zM255 463h1v1h-1zM272 437h1v1h-1zM151 455h1v1h-1zM208 441h1v1h-1zM462 424h1v1h-1zM306 443h1v1h-1zM78 453h1v1h-1zM378 463h1v1h-1zM208 447h1v1h-1zM492 428h1v1h-1zM157 428h1v1h-1zM246 448h1v1h-1zM170 440h1v1h-1zM60 465h1v1h-1zM88 478h1v1h-1zM86 464h1v1h-1zM140 447h1v1h-1zM94 454h1v1h-1zM205 441h1v1h-1zM91 434h1v1h-1zM286 437h1v1h-1zM368 461h1v1h-1zM249 465h1v1h-1zM250 440h1v1h-1zM61 456h1v1h-1zM298 457h1v1h-1zM197 458h1v1h-1zM247 438h1v1h-1zM175 444h1v1h-1zM237 448h1v1h-1zM151 433h1v1h-1zM86 446h1v1h-1zM60 456h1v1h-1zM174 442h1v1h-1zM134 418h1v1h-1zM288 458h1v1h-1zM72 449h1v1h-1zM126 475h1v1h-1zM193 428h1v1h-1zM444 461h1v1h-1zM247 467h1v1h-1zM78 459h1v1h-1zM102 463h1v1h-1zM72 439h1v1h-1zM139 472h1v1h-1zM330 453h1v1h-1zM136 475h1v1h-1zM159 470h1v1h-1zM155 463h1v1h-1zM263 446h1v1h-1zM146 449h1v1h-1zM355 442h1v1h-1zM322 433h1v1h-1zM98 465h1v1h-1zM312 453h1v1h-1zM87 447h1v1h-1zM236 470h1v1h-1zM95 453h1v1h-1zM134 450h1v1h-1zM347 432h1v1h-1zM300 441h1v1h-1zM183 444h1v1h-1zM452 443h1v1h-1zM238 464h1v1h-1zM329 400h1v1h-1zM245 449h1v1h-1zM262 467h1v1h-1zM83 444h1v1h-1zM135 439h1v1h-1zM414 446h1v1h-1zM104 434h1v1h-1zM318 456h1v1h-1zM202 466h1v1h-1zM390 419h1v1h-1zM191 436h1v1h-1zM346 452h1v1h-1zM106 445h1v1h-1zM77 477h1v1h-1zM320 431h1v1h-1zM88 465h1v1h-1zM242 447h1v1h-1zM158 464h1v1h-1zM107 473h1v1h-1zM56 449h1v1h-1zM262 445h1v1h-1zM452 423h1v1h-1zM142 451h1v1h-1zM241 469h1v1h-1zM123 465h1v1h-1zM183 455h1v1h-1zM173 452h1v1h-1zM362 449h1v1h-1zM195 465h1v1h-1zM386 463h1v1h-1zM302 400h1v1h-1zM165 463h1v1h-1zM405 451h1v1h-1zM373 465h1v1h-1zM235 449h1v1h-1zM170 449h1v1h-1zM349 425h1v1h-1zM165 456h1v1h-1zM113 475h1v1h-1zM157 438h1v1h-1zM138 471h1v1h-1zM295 434h1v1h-1zM166 448h1v1h-1zM118 451h1v1h-1zM379 408h1v1h-1zM75 454h1v1h-1zM225 434h1v1h-1zM160 447h1v1h-1zM97 469h1v1h-1zM210 424h1v1h-1zM419 442h1v1h-1zM370 428h1v1h-1zM69 472h1v1h-1zM117 470h1v1h-1zM238 460h1v1h-1zM273 437h1v1h-1zM442 428h1v1h-1zM92 452h1v1h-1zM87 459h1v1h-1zM276 432h1v1h-1zM211 466h1v1h-1zM149 442h1v1h-1zM309 433h1v1h-1zM344 441h1v1h-1zM356 455h1v1h-1zM160 439h1v1h-1zM73 458h1v1h-1zM192 449h1v1h-1zM267 446h1v1h-1zM202 457h1v1h-1zM384 445h1v1h-1zM280 459h1v1h-1zM345 439h1v1h-1zM126 456h1v1h-1zM419 432h1v1h-1zM307 429h1v1h-1zM163 456h1v1h-1zM251 440h1v1h-1zM102 442h1v1h-1zM417 439h1v1h-1zM225 441h1v1h-1zM336 405h1v1h-1zM358 446h1v1h-1zM434 439h1v1h-1zM454 437h1v1h-1zM376 442h1v1h-1zM104 439h1v1h-1zM362 440h1v1h-1zM211 458h1v1h-1zM274 456h1v1h-1zM123 451h1v1h-1zM68 445h1v1h-1zM250 418h1v1h-1zM177 455h1v1h-1zM283 450h1v1h-1zM72 452h1v1h-1zM241 437h1v1h-1zM85 473h1v1h-1zM269 440h1v1h-1zM59 482h1v1h-1zM372 444h1v1h-1zM296 468h1v1h-1zM162 443h1v1h-1zM396 441h1v1h-1zM197 454h1v1h-1zM91 446h1v1h-1zM234 452h1v1h-1zM268 424h1v1h-1zM325 425h1v1h-1zM76 439h1v1h-1zM69 452h1v1h-1zM144 447h1v1h-1zM154 449h1v1h-1zM336 440h1v1h-1zM111 450h1v1h-1zM268 441h1v1h-1zM181 438h1v1h-1zM388 444h1v1h-1zM143 424h1v1h-1zM331 462h1v1h-1zM257 454h1v1h-1zM234 444h1v1h-1zM288 456h1v1h-1zM258 458h1v1h-1zM137 441h1v1h-1zM479 446h1v1h-1zM111 462h1v1h-1zM295 457h1v1h-1zM76 462h1v1h-1zM116 455h1v1h-1zM107 473h1v1h-1zM129 434h1v1h-1zM116 461h1v1h-1zM312 440h1v1h-1zM125 473h1v1h-1zM329 460h1v1h-1zM103 450h1v1h-1zM202 467h1v1h-1zM148 456h1v1h-1zM202 441h1v1h-1zM121 464h1v1h-1zM190 455h1v1h-1zM366 426h1v1h-1zM100 467h1v1h-1zM362 440h1v1h-1zM210 459h1v1h-1zM276 440h1v1h-1zM75 449h1v1h-1zM200 457h1v1h-1zM206 437h1v1h-1zM309 442h1v1h-1zM95 446h1v1h-1zM211 472h1v1h-1zM172 447h1v1h-1zM105 451h1v1h-1zM129 448h1v1h-1zM123 439h1v1h-1zM261 468h1v1h-1zM290 435h1v1h-1zM400 425h1v1h-1zM166 472h1v1h-1zM58 463h1v1h-1zM86 455h1v1h-1zM146 458h1v1h-1zM80 448h1v1h-1zM183 456h1v1h-1zM331 434h1v1h-1zM381 421h1v1h-1zM319 435h1v1h-1zM165 465h1v1h-1zM135 445h1v1h-1zM408 444h1v1h-1zM289 433h1v1h-1zM57 472h1v1h-1zM113 448h1v1h-1zM249 441h1v1h-1zM288 447h1v1h-1zM266 460h1v1h-1zM110 450h1v1h-1zM343 411h1v1h-1zM310 442h1v1h-1zM202 433h1v1h-1zM354 433h1v1h-1zM339 461h1v1h-1zM320 431h1v1h-1zM335 455h1v1h-1zM153 466h1v1h-1zM465 429h1v1h-1zM103 474h1v1h-1zM105 433h1v1h-1zM311 421h1v1h-1zM374 433h1v1h-1zM208 446h1v1h-1zM329 452h1v1h-1zM350 425h1v1h-1zM213 450h1v1h-1zM266 439h1v1h-1zM216 443h1v1h-1zM162 453h1v1h-1zM70 457h1v1h-1zM337 453h1v1h-1zM80 474h1v1h-1zM111 459h1v1h-1zM206 444h1v1h-1zM287 443h1v1h-1zM448 458h1v1h-1zM90 459h1v1h-1zM435 429h1v1h-1zM366 442h1v1h-1zM218 457h1v1h-1zM110 444h1v1h-1zM380 453h1v1h-1zM322 458h1v1h-1zM112 462h1v1h-1zM101 444h1v1h-1zM264 440h1v1h-1zM149 455h1v1h-1zM208 442h1v1h-1zM62 458h1v1h-1zM94 439h1v1h-1zM326 459h1v1h-1zM164 437h1v1h-1zM223 461h1v1h-1zM348 434h1v1h-1zM355 440h1v1h-1zM188 456h1v1h-1zM103 456h1v1h-1zM57 466h1v1h-1zM181 456h1v1h-1zM76 427h1v1h-1zM337 425h1v1h-1zM383 438h1v1h-1zM321 461h1v1h-1zM59 448h1v1h-1zM361 449h1v1h-1zM170 452h1v1h-1zM186 464h1v1h-1zM385 431h1v1h-1zM280 451h1v1h-1zM133 468h1v1h-1zM280 417h1v1h-1zM329 458h1v1h-1zM76 469h1v1h-1zM94 476h1v1h-1zM62 475h1v1h-1zM409 436h1v1h-1zM196 391h1v1h-1zM426 435h1v1h-1zM90 456h1v1h-1zM268 437h1v1h-1zM219 435h1v1h-1zM70 471h1v1h-1zM138 460h1v1h-1zM229 458h1v1h-1zM283 443h1v1h-1zM98 467h1v1h-1zM230 435h1v1h-1zM307 449h1v1h-1zM341 453h1v1h-1zM156 442h1v1h-1zM153 467h1v1h-1zM346 430h1v1h-1zM121 438h1v1h-1zM96 435h1v1h-1zM141 468h1v1h-1zM274 457h1v1h-1zM307 425h1v1h-1zM205 453h1v1h-1zM342 442h1v1h-1zM97 441h1v1h-1zM114 468h1v1h-1zM300 434h1v1h-1zM196 452h1v1h-1zM209 444h1v1h-1zM274 437h1v1h-1zM212 455h1v1h-1zM318 461h1v1h-1zM89 455h1v1h-1zM325 433h1v1h-1zM411 437h1v1h-1zM286 429h1v1h-1zM470 421h1v1h-1zM283 454h1v1h-1zM146 468h1v1h-1zM188 443h1v1h-1zM273 458h1v1h-1zM188 424h1v1h-1zM238 439h1v1h-1zM299 458h1v1h-1zM269 450h1v1h-1zM423 386h1v1h-1zM98 475h1v1h-1zM92 460h1v1h-1zM87 441h1v1h-1zM65 469h1v1h-1zM107 452h1v1h-1zM105 473h1v1h-1zM98 455h1v1h-1zM214 457h1v1h-1zM66 461h1v1h-1zM308 411h1v1h-1zM203 429h1v1h-1zM303 452h1v1h-1zM69 457h1v1h-1zM265 447h1v1h-1zM57 469h1v1h-1zM118 460h1v1h-1zM268 457h1v1h-1zM107 460h1v1h-1zM98 439h1v1h-1zM298 467h1v1h-1zM303 446h1v1h-1zM157 473h1v1h-1zM64 456h1v1h-1zM204 446h1v1h-1zM385 428h1v1h-1zM235 441h1v1h-1zM143 440h1v1h-1zM474 432h1v1h-1zM78 460h1v1h-1zM123 440h1v1h-1zM230 445h1v1h-1zM218 450h1v1h-1zM56 440h1v1h-1zM150 461h1v1h-1zM220 450h1v1h-1zM197 446h1v1h-1zM452 450h1v1h-1zM176 427h1v1h-1zM219 444h1v1h-1zM239 439h1v1h-1zM309 433h1v1h-1zM78 467h1v1h-1zM402 436h1v1h-1zM64 458h1v1h-1zM335 434h1v1h-1zM463 429h1v1h-1zM328 439h1v1h-1zM250 438h1v1h-1zM62 479h1v1h-1zM243 461h1v1h-1zM228 424h1v1h-1zM98 456h1v1h-1zM231 470h1v1h-1zM152 459h1v1h-1zM207 463h1v1h-1zM143 456h1v1h-1zM163 440h1v1h-1zM323 452h1v1h-1zM138 461h1v1h-1zM293 453h1v1h-1zM230 426h1v1h-1zM108 452h1v1h-1zM465 457h1v1h-1zM258 444h1v1h-1zM271 449h1v1h-1zM242 454h1v1h-1zM190 460h1v1h-1zM380 439h1v1h-1zM71 471h1v1h-1zM96 452h1v1h-1zM441 419h1v1h-1zM354 459h1v1h-1zM190 458h1v1h-1zM110 437h1v1h-1zM422 431h1v1h-1zM285 460h1v1h-1zM175 459h1v1h-1zM148 445h1v1h-1zM161 431h1v1h-1zM122 471h1v1h-1zM101 475h1v1h-1zM95 439h1v1h-1zM262 456h1v1h-1zM350 463h1v1h-1zM137 454h1v1h-1zM160 434h1v1h-1zM138 474h1v1h-1zM299 445h1v1h-1zM412 429h1v1h-1zM382 431h1v1h-1zM93 468h1v1h-1zM175 465h1v1h-1zM341 425h1v1h-1zM89 469h1v1h-1zM258 430h1v1h-1zM232 457h1v1h-1zM161 462h1v1h-1zM236 457h1v1h-1zM64 461h1v1h-1zM406 464h1v1h-1zM96 454h1v1h-1zM369 439h1v1h-1zM379 442h1v1h-1zM397 423h1v1h-1zM345 450h1v1h-1zM161 455h1v1h-1zM288 459h1v1h-1zM128 447h1v1h-1zM363 446h1v1h-1zM227 446h1v1h-1zM63 453h1v1h-1zM202 449h1v1h-1zM331 447h1v1h-1zM388 455h1v1h-1zM275 437h1v1h-1zM240 427h1v1h-1zM288 432h1v1h-1zM346 431h1v1h-1zM119 462h1v1h-1zM89 468h1v1h-1zM286 419h1v1h-1zM293 434h1v1h-1zM278 452h1v1h-1zM138 462h1v1h-1zM213 443h1v1h-1zM195 469h1v1h-1zM65 474h1v1h-1zM72 475h1v1h-1zM272 461h1v1h-1zM228 446h1v1h-1zM279 422h1v1h-1zM275 436h1v1h-1zM252 443h1v1h-1zM78 449h1v1h-1zM259 427h1v1h-1zM415 394h1v1h-1zM412 429h1v1h-1zM89 478h1v1h-1zM310 463h1v1h-1zM267 459h1v1h-1zM216 457h1v1h-1zM394 434h1v1h-1zM445 442h1v1h-1zM379 454h1v1h-1zM94 443h1v1h-1zM442 438h1v1h-1zM109 454h1v1h-1zM227 450h1v1h-1zM170 431h1v1h-1zM164 456h1v1h-1zM215 467h1v1h-1zM259 462h1v1h-1zM288 447h1v1h-1zM134 452h1v1h-1zM354 451h1v1h-1zM274 453h1v1h-1zM183 459h1v1h-1zM155 442h1v1h-1zM331 443h1v1h-1zM70 447h1v1h-1zM235 435h1v1h-1zM221 466h1v1h-1zM169 471h1v1h-1zM192 468h1v1h-1zM367 456h1v1h-1zM64 441h1v1h-1zM114 462h1v1h-1zM206 438h1v1h-1zM314 421h1v1h-1zM378 433h1v1h-1zM187 451h1v1h-1zM135 471h1v1h-1zM221 457h1v1h-1zM258 443h1v1h-1zM239 449h1v1h-1zM129 449h1v1h-1zM64 480h1v1h-1zM95 437h1v1h-1zM116 441h1v1h-1zM315 455h1v1h-1zM315 422h1v1h-1zM151 448h1v1h-1zM307 440h1v1h-1zM155 462h1v1h-1zM323 443h1v1h-1zM82 446h1v1h-1zM264 461h1v1h-1zM226 442h1v1h-1zM125 408h1v1h-1zM160 453h1v1h-1zM99 469h1v1h-1zM110 451h1v1h-1zM278 442h1v1h-1zM326 459h1v1h-1zM421 375h1v1h-1zM220 456h1v1h-1zM406 445h1v1h-1zM474 463h1v1h-1zM480 423h1v1h-1zM225 446h1v1h-1zM402 410h1v1h-1zM185 451h1v1h-1zM268 463h1v1h-1zM213 440h1v1h-1zM213 468h1v1h-1zM305 418h1v1h-1zM244 439h1v1h-1zM238 441h1v1h-1zM316 438h1v1h-1zM94 448h1v1h-1zM410 441h1v1h-1z" fill="#00ffff"/><path d="M73 447h1v1h-1zM283 429h1v1h-1zM320 448h1v1h-1zM459 428h1v1h-1zM159 447h1v1h-1zM108 421h1v1h-1zM469 436h1v1h-1zM254 436h1v1h-1zM412 422h1v1h-1zM59 447h1v1h-1zM285 430h1v1h-1zM418 380h1v1h-1zM145 451h1v1h-1zM257 437h1v1h-1zM182 418h1v1h-1zM385 438h1v1h-1zM353 438h1v1h-1zM136 456h1v1h-1zM376 408h1v1h-1zM133 455h1v1h-1zM81 444h1v1h-1zM332 435h1v1h-1zM333 433h1v1h-1zM409 429h1v1h-1zM182 416h1v1h-1zM87 454h1v1h-1zM96 439h1v1h-1zM354 420h1v1h-1zM389 418h1v1h-1zM414 413h1v1h-1zM177 451h1v1h-1zM311 438h1v1h-1zM141 444h1v1h-1zM123 429h1v1h-1zM449 413h1v1h-1zM93 448h1v1h-1zM129 447h1v1h-1zM359 439h1v1h-1zM216 418h1v1h-1zM105 433h1v1h-1zM99 448h1v1h-1zM415 435h1v1h-1zM135 421h1v1h-1zM333 436h1v1h-1zM93 431h1v1h-1zM124 450h1v1h-1zM126 455h1v1h-1zM145 439h1v1h-1zM140 418h1v1h-1zM180 427h1v1h-1zM121 457h1v1h-1zM389 435h1v1h-1zM97 451h1v1h-1zM110 442h1v1h-1zM310 443h1v1h-1zM274 433h1v1h-1zM445 442h1v1h-1zM121 429h1v1h-1zM155 445h1v1h-1zM181 435h1v1h-1zM331 439h1v1h-1zM118 431h1v1h-1zM69 440h1v1h-1zM357 431h1v1h-1zM320 442h1v1h-1zM263 438h1v1h-1zM169 438h1v1h-1zM80 442h1v1h-1zM365 436h1v1h-1zM267 434h1v1h-1zM97 446h1v1h-1zM96 439h1v1h-1zM119 441h1v1h-1zM153 454h1v1h-1zM293 445h1v1h-1zM326 425h1v1h-1zM248 427h1v1h-1zM97 443h1v1h-1zM437 431h1v1h-1zM186 424h1v1h-1zM274 438h1v1h-1zM250 432h1v1h-1zM90 441h1v1h-1zM302 446h1v1h-1zM129 429h1v1h-1zM209 445h1v1h-1zM229 432h1v1h-1zM236 445h1v1h-1zM155 411h1v1h-1zM148 404h1v1h-1zM193 444h1v1h-1zM59 437h1v1h-1zM344 424h1v1h-1zM160 441h1v1h-1zM282 452h1v1h-1zM212 438h1v1h-1zM313 447h1v1h-1zM145 451h1v1h-1zM97 414h1v1h-1zM120 449h1v1h-1zM151 432h1v1h-1zM267 396h1v1h-1zM166 435h1v1h-1zM72 447h1v1h-1zM115 440h1v1h-1zM65 448h1v1h-1zM258 452h1v1h-1zM92 430h1v1h-1zM368 443h1v1h-1zM224 427h1v1h-1zM196 444h1v1h-1zM257 433h1v1h-1zM106 444h1v1h-1zM198 455h1v1h-1zM291 445h1v1h-1zM59 444h1v1h-1zM366 434h1v1h-1zM273 432h1v1h-1zM112 439h1v1h-1zM169 440h1v1h-1zM401 425h1v1h-1zM280 435h1v1h-1zM379 393h1v1h-1zM414 432h1v1h-1zM140 435h1v1h-1zM204 449h1v1h-1zM168 426h1v1h-1zM255 429h1v1h-1zM133 421h1v1h-1zM156 435h1v1h-1zM195 388h1v1h-1zM361 408h1v1h-1zM241 445h1v1h-1zM344 430h1v1h-1zM431 433h1v1h-1zM140 437h1v1h-1zM90 444h1v1h-1zM371 406h1v1h-1zM62 448h1v1h-1zM106 437h1v1h-1zM74 419h1v1h-1zM206 440h1v1h-1zM168 442h1v1h-1zM252 410h1v1h-1zM228 418h1v1h-1zM85 442h1v1h-1zM465 389h1v1h-1zM160 444h1v1h-1zM63 450h1v1h-1zM139 431h1v1h-1zM318 439h1v1h-1zM91 448h1v1h-1zM111 422h1v1h-1zM393 422h1v1h-1zM134 450h1v1h-1zM459 429h1v1h-1zM136 431h1v1h-1zM345 426h1v1h-1zM94 437h1v1h-1zM400 402h1v1h-1zM93 450h1v1h-1zM173 447h1v1h-1zM349 433h1v1h-1zM226 450h1v1h-1zM170 444h1v1h-1zM180 422h1v1h-1zM172 444h1v1h-1zM218 441h1v1h-1zM122 432h1v1h-1zM108 422h1v1h-1zM232 445h1v1h-1zM147 448h1v1h-1zM178 451h1v1h-1zM110 442h1v1h-1zM56 444h1v1h-1zM296 426h1v1h-1zM107 442h1v1h-1zM122 443h1v1h-1zM200 454h1v1h-1zM65 429h1v1h-1zM160 428h1v1h-1zM60 452h1v1h-1zM182 451h1v1h-1zM377 439h1v1h-1zM102 434h1v1h-1zM96 437h1v1h-1zM211 423h1v1h-1zM470 441h1v1h-1zM332 405h1v1h-1zM58 451h1v1h-1zM152 428h1v1h-1zM318 438h1v1h-1zM146 435h1v1h-1zM306 436h1v1h-1zM258 425h1v1h-1zM228 451h1v1h-1zM194 437h1v1h-1zM220 413h1v1h-1zM188 445h1v1h-1zM242 419h1v1h-1zM272 436h1v1h-1zM359 443h1v1h-1zM258 437h1v1h-1zM322 445h1v1h-1zM296 433h1v1h-1zM193 452h1v1h-1zM106 440h1v1h-1zM178 444h1v1h-1zM416 440h1v1h-1zM418 428h1v1h-1zM65 447h1v1h-1zM98 439h1v1h-1zM396 417h1v1h-1zM68 451h1v1h-1zM287 451h1v1h-1zM249 443h1v1h-1zM79 443h1v1h-1zM139 423h1v1h-1zM159 447h1v1h-1zM93 449h1v1h-1zM82 443h1v1h-1zM228 442h1v1h-1zM68 448h1v1h-1zM173 434h1v1h-1zM176 445h1v1h-1zM159 434h1v1h-1zM102 451h1v1h-1zM239 442h1v1h-1zM341 418h1v1h-1zM462 431h1v1h-1zM142 454h1v1h-1zM343 426h1v1h-1zM131 450h1v1h-1zM132 447h1v1h-1zM80 459h1v1h-1zM249 446h1v1h-1zM69 448h1v1h-1zM438 418h1v1h-1zM56 444h1v1h-1zM166 448h1v1h-1zM131 417h1v1h-1zM191 438h1v1h-1zM63 443h1v1h-1zM206 442h1v1h-1zM90 445h1v1h-1zM365 437h1v1h-1zM78 428h1v1h-1zM261 452h1v1h-1zM188 415h1v1h-1zM418 431h1v1h-1zM216 430h1v1h-1zM380 438h1v1h-1zM71 453h1v1h-1zM191 444h1v1h-1zM296 413h1v1h-1zM268 439h1v1h-1zM341 437h1v1h-1zM95 449h1v1h-1zM274 434h1v1h-1zM102 423h1v1h-1zM75 440h1v1h-1zM170 439h1v1h-1zM229 431h1v1h-1zM108 447h1v1h-1zM353 442h1v1h-1zM311 448h1v1h-1zM202 441h1v1h-1zM119 451h1v1h-1zM195 431h1v1h-1zM130 455h1v1h-1zM387 402h1v1h-1zM116 447h1v1h-1zM198 415h1v1h-1zM175 431h1v1h-1zM77 458h1v1h-1zM183 443h1v1h-1zM59 450h1v1h-1zM180 434h1v1h-1zM178 447h1v1h-1zM297 441h1v1h-1zM328 431h1v1h-1zM274 446h1v1h-1zM242 411h1v1h-1zM262 447h1v1h-1zM236 443h1v1h-1zM166 457h1v1h-1zM204 445h1v1h-1zM175 407h1v1h-1zM197 447h1v1h-1zM188 448h1v1h-1zM125 447h1v1h-1zM140 428h1v1h-1zM239 439h1v1h-1zM362 431h1v1h-1zM256 448h1v1h-1zM270 442h1v1h-1zM217 434h1v1h-1zM199 456h1v1h-1zM244 439h1v1h-1zM92 451h1v1h-1zM56 447h1v1h-1zM388 426h1v1h-1zM412 412h1v1h-1zM64 457h1v1h-1zM94 435h1v1h-1zM78 444h1v1h-1zM68 426h1v1h-1zM178 449h1v1h-1zM421 434h1v1h-1zM85 439h1v1h-1zM153 448h1v1h-1zM265 441h1v1h-1zM308 428h1v1h-1zM163 422h1v1h-1zM71 454h1v1h-1zM139 449h1v1h-1zM93 439h1v1h-1zM387 438h1v1h-1zM346 437h1v1h-1zM394 444h1v1h-1zM56 446h1v1h-1zM181 453h1v1h-1zM363 437h1v1h-1zM199 443h1v1h-1zM170 447h1v1h-1zM289 413h1v1h-1zM302 434h1v1h-1zM334 437h1v1h-1zM64 421h1v1h-1zM100 453h1v1h-1zM187 440h1v1h-1zM123 447h1v1h-1zM180 448h1v1h-1zM334 425h1v1h-1zM192 434h1v1h-1zM474 427h1v1h-1zM57 442h1v1h-1zM313 414h1v1h-1zM405 418h1v1h-1zM271 429h1v1h-1zM279 421h1v1h-1zM119 445h1v1h-1zM225 431h1v1h-1zM76 449h1v1h-1zM386 417h1v1h-1zM226 446h1v1h-1zM133 419h1v1h-1zM76 442h1v1h-1zM209 442h1v1h-1zM142 408h1v1h-1zM63 444h1v1h-1zM248 447h1v1h-1zM431 391h1v1h-1zM442 371h1v1h-1zM381 442h1v1h-1zM146 439h1v1h-1zM115 450h1v1h-1zM314 450h1v1h-1zM144 449h1v1h-1zM192 449h1v1h-1zM277 437h1v1h-1zM222 441h1v1h-1zM60 453h1v1h-1zM406 422h1v1h-1zM84 448h1v1h-1zM130 449h1v1h-1zM130 431h1v1h-1zM235 452h1v1h-1zM199 436h1v1h-1zM108 448h1v1h-1zM85 448h1v1h-1zM288 435h1v1h-1zM84 447h1v1h-1zM294 429h1v1h-1zM276 444h1v1h-1zM384 418h1v1h-1zM205 442h1v1h-1zM265 442h1v1h-1zM421 438h1v1h-1zM123 453h1v1h-1zM254 436h1v1h-1zM166 452h1v1h-1zM174 445h1v1h-1zM320 433h1v1h-1zM232 439h1v1h-1zM453 425h1v1h-1zM244 440h1v1h-1zM236 444h1v1h-1zM72 447h1v1h-1zM67 419h1v1h-1zM146 446h1v1h-1zM128 442h1v1h-1zM165 386h1v1h-1zM99 438h1v1h-1zM123 445h1v1h-1zM133 454h1v1h-1zM209 440h1v1h-1zM299 429h1v1h-1zM320 419h1v1h-1zM167 455h1v1h-1zM246 444h1v1h-1zM383 447h1v1h-1zM197 453h1v1h-1zM261 447h1v1h-1zM206 418h1v1h-1zM147 452h1v1h-1zM153 408h1v1h-1zM371 439h1v1h-1zM171 435h1v1h-1zM124 448h1v1h-1zM402 418h1v1h-1zM71 441h1v1h-1zM130 437h1v1h-1zM228 432h1v1h-1zM415 419h1v1h-1zM103 450h1v1h-1zM71 434h1v1h-1zM211 443h1v1h-1zM91 406h1v1h-1zM247 449h1v1h-1zM263 434h1v1h-1zM419 437h1v1h-1zM150 443h1v1h-1zM319 444h1v1h-1zM147 435h1v1h-1zM170 452h1v1h-1zM130 453h1v1h-1zM475 419h1v1h-1zM110 439h1v1h-1zM124 435h1v1h-1zM407 434h1v1h-1zM187 437h1v1h-1zM375 433h1v1h-1zM365 405h1v1h-1zM390 429h1v1h-1zM306 416h1v1h-1zM298 440h1v1h-1zM337 436h1v1h-1zM128 441h1v1h-1zM264 452h1v1h-1zM146 427h1v1h-1zM167 431h1v1h-1zM96 445h1v1h-1zM200 442h1v1h-1zM300 435h1v1h-1zM140 439h1v1h-1zM189 437h1v1h-1zM100 455h1v1h-1zM61 453h1v1h-1zM122 442h1v1h-1zM147 438h1v1h-1zM216 443h1v1h-1zM379 389h1v1h-1zM439 433h1v1h-1zM58 450h1v1h-1zM173 432h1v1h-1zM230 449h1v1h-1zM98 412h1v1h-1zM101 421h1v1h-1zM203 435h1v1h-1zM123 438h1v1h-1zM218 449h1v1h-1zM174 450h1v1h-1zM159 425h1v1h-1zM66 443h1v1h-1zM260 451h1v1h-1zM63 396h1v1h-1zM390 411h1v1h-1zM90 444h1v1h-1zM175 440h1v1h-1zM439 384h1v1h-1zM306 418h1v1h-1zM255 442h1v1h-1zM274 439h1v1h-1zM203 446h1v1h-1zM177 401h1v1h-1zM67 455h1v1h-1zM62 445h1v1h-1zM201 428h1v1h-1zM364 433h1v1h-1zM235 447h1v1h-1zM382 434h1v1h-1zM109 422h1v1h-1zM101 451h1v1h-1zM235 438h1v1h-1zM256 434h1v1h-1zM393 442h1v1h-1zM69 456h1v1h-1zM92 441h1v1h-1zM319 445h1v1h-1zM136 443h1v1h-1zM275 402h1v1h-1zM390 425h1v1h-1zM179 442h1v1h-1zM72 447h1v1h-1zM445 415h1v1h-1zM134 438h1v1h-1zM391 443h1v1h-1zM306 448h1v1h-1zM89 445h1v1h-1zM189 429h1v1h-1zM174 446h1v1h-1zM170 413h1v1h-1zM197 447h1v1h-1zM124 438h1v1h-1zM78 454h1v1h-1zM366 423h1v1h-1zM324 447h1v1h-1zM290 441h1v1h-1zM69 443h1v1h-1zM101 453h1v1h-1zM303 437h1v1h-1zM218 425h1v1h-1zM142 451h1v1h-1zM95 449h1v1h-1zM106 445h1v1h-1zM183 441h1v1h-1zM89 454h1v1h-1zM133 444h1v1h-1zM375 434h1v1h-1zM122 447h1v1h-1zM186 450h1v1h-1zM397 429h1v1h-1zM365 437h1v1h-1zM326 422h1v1h-1zM220 443h1v1h-1zM319 441h1v1h-1zM429 434h1v1h-1zM139 438h1v1h-1zM239 444h1v1h-1zM190 448h1v1h-1zM127 443h1v1h-1zM138 455h1v1h-1zM157 442h1v1h-1zM100 446h1v1h-1zM290 449h1v1h-1zM247 434h1v1h-1zM168 444h1v1h-1zM58 449h1v1h-1zM199 436h1v1h-1zM272 422h1v1h-1zM150 439h1v1h-1zM297 399h1v1h-1zM126 451h1v1h-1zM160 450h1v1h-1zM283 433h1v1h-1zM272 424h1v1h-1zM151 437h1v1h-1zM152 446h1v1h-1zM145 434h1v1h-1zM89 437h1v1h-1zM86 452h1v1h-1zM137 442h1v1h-1zM351 441h1v1h-1zM374 433h1v1h-1zM218 415h1v1h-1zM135 449h1v1h-1zM315 445h1v1h-1zM78 454h1v1h-1zM133 440h1v1h-1zM175 442h1v1h-1zM179 450h1v1h-1zM235 434h1v1h-1zM354 434h1v1h-1zM74 450h1v1h-1zM202 436h1v1h-1zM333 435h1v1h-1zM376 441h1v1h-1zM247 417h1v1h-1zM447 421h1v1h-1zM180 448h1v1h-1zM70 440h1v1h-1zM140 436h1v1h-1zM173 437h1v1h-1zM214 454h1v1h-1zM70 454h1v1h-1zM228 443h1v1h-1zM394 447h1v1h-1zM105 445h1v1h-1zM187 453h1v1h-1zM292 447h1v1h-1zM421 434h1v1h-1zM218 430h1v1h-1zM208 431h1v1h-1zM75 454h1v1h-1zM334 437h1v1h-1zM449 430h1v1h-1zM234 440h1v1h-1zM188 448h1v1h-1zM352 441h1v1h-1zM284 437h1v1h-1zM318 428h1v1h-1zM336 411h1v1h-1zM143 450h1v1h-1zM390 430h1v1h-1zM65 450h1v1h-1zM235 429h1v1h-1zM377 432h1v1h-1zM187 446h1v1h-1zM278 430h1v1h-1zM431 433h1v1h-1zM284 448h1v1h-1zM261 446h1v1h-1zM446 444h1v1h-1zM232 426h1v1h-1zM388 427h1v1h-1zM374 444h1v1h-1zM146 448h1v1h-1zM159 456h1v1h-1zM214 436h1v1h-1zM69 454h1v1h-1zM232 434h1v1h-1zM84 450h1v1h-1zM125 443h1v1h-1zM419 436h1v1h-1zM112 451h1v1h-1zM207 428h1v1h-1zM263 438h1v1h-1zM97 450h1v1h-1zM72 428h1v1h-1zM226 438h1v1h-1zM175 448h1v1h-1zM326 439h1v1h-1zM142 451h1v1h-1zM225 445h1v1h-1zM171 444h1v1h-1zM183 450h1v1h-1zM153 439h1v1h-1zM100 449h1v1h-1zM132 445h1v1h-1zM78 440h1v1h-1zM180 438h1v1h-1zM260 444h1v1h-1zM268 426h1v1h-1zM61 458h1v1h-1zM258 442h1v1h-1zM119 446h1v1h-1zM173 441h1v1h-1zM168 431h1v1h-1zM358 442h1v1h-1zM208 426h1v1h-1zM69 446h1v1h-1zM283 415h1v1h-1zM204 414h1v1h-1zM340 431h1v1h-1zM107 446h1v1h-1zM125 452h1v1h-1zM213 444h1v1h-1zM58 439h1v1h-1zM187 423h1v1h-1zM259 444h1v1h-1zM96 449h1v1h-1zM264 434h1v1h-1zM431 445h1v1h-1zM308 433h1v1h-1zM156 431h1v1h-1zM348 440h1v1h-1zM353 430h1v1h-1zM473 378h1v1h-1zM219 438h1v1h-1zM159 442h1v1h-1zM56 438h1v1h-1zM446 437h1v1h-1zM156 448h1v1h-1zM122 451h1v1h-1zM156 428h1v1h-1zM139 425h1v1h-1zM146 429h1v1h-1zM276 435h1v1h-1zM65 450h1v1h-1zM69 442h1v1h-1zM135 443h1v1h-1zM345 437h1v1h-1zM153 423h1v1h-1zM152 433h1v1h-1zM345 442h1v1h-1zM214 436h1v1h-1zM451 433h1v1h-1zM217 437h1v1h-1zM375 419h1v1h-1zM123 443h1v1h-1zM182 448h1v1h-1zM372 429h1v1h-1zM62 446h1v1h-1zM238 434h1v1h-1zM134 452h1v1h-1zM166 453h1v1h-1zM207 393h1v1h-1zM112 433h1v1h-1zM78 446h1v1h-1zM92 445h1v1h-1zM204 449h1v1h-1zM249 435h1v1h-1zM139 447h1v1h-1zM437 419h1v1h-1zM499 427h1v1h-1zM56 441h1v1h-1zM68 450h1v1h-1zM288 434h1v1h-1zM141 455h1v1h-1zM103 440h1v1h-1zM190 452h1v1h-1zM448 409h1v1h-1zM106 458h1v1h-1zM163 433h1v1h-1zM149 433h1v1h-1zM325 427h1v1h-1zM137 435h1v1h-1zM138 444h1v1h-1zM104 446h1v1h-1zM230 441h1v1h-1zM121 450h1v1h-1zM237 441h1v1h-1zM204 420h1v1h-1zM64 445h1v1h-1zM380 449h1v1h-1zM81 456h1v1h-1zM282 439h1v1h-1zM393 433h1v1h-1zM239 442h1v1h-1zM268 421h1v1h-1zM97 443h1v1h-1zM220 434h1v1h-1zM145 447h1v1h-1zM106 444h1v1h-1zM389 392h1v1h-1zM236 421h1v1h-1zM320 435h1v1h-1zM389 434h1v1h-1zM110 421h1v1h-1zM298 418h1v1h-1zM330 413h1v1h-1zM201 443h1v1h-1zM68 440h1v1h-1zM144 443h1v1h-1zM111 444h1v1h-1zM80 449h1v1h-1zM132 451h1v1h-1zM85 447h1v1h-1zM211 441h1v1h-1zM210 443h1v1h-1zM142 440h1v1h-1zM235 441h1v1h-1zM99 449h1v1h-1zM316 444h1v1h-1zM241 440h1v1h-1zM270 433h1v1h-1zM190 450h1v1h-1zM384 436h1v1h-1zM92 444h1v1h-1zM210 453h1v1h-1zM426 429h1v1h-1zM199 444h1v1h-1zM120 456h1v1h-1zM281 429h1v1h-1zM339 415h1v1h-1zM289 440h1v1h-1zM160 443h1v1h-1zM350 431h1v1h-1zM276 448h1v1h-1zM367 414h1v1h-1zM182 450h1v1h-1zM217 437h1v1h-1zM75 443h1v1h-1zM183 453h1v1h-1zM461 418h1v1h-1zM250 450h1v1h-1zM150 448h1v1h-1zM198 449h1v1h-1zM224 437h1v1h-1zM169 428h1v1h-1zM311 433h1v1h-1zM184 439h1v1h-1zM232 431h1v1h-1zM144 444h1v1h-1zM198 427h1v1h-1zM336 431h1v1h-1zM246 422h1v1h-1zM260 430h1v1h-1zM128 445h1v1h-1zM386 442h1v1h-1zM202 454h1v1h-1zM342 417h1v1h-1zM240 443h1v1h-1zM425 423h1v1h-1zM80 441h1v1h-1zM222 448h1v1h-1zM264 424h1v1h-1zM124 455h1v1h-1zM98 455h1v1h-1zM93 459h1v1h-1zM142 448h1v1h-1zM151 439h1v1h-1zM95 448h1v1h-1zM251 452h1v1h-1zM87 440h1v1h-1zM86 421h1v1h-1zM218 447h1v1h-1zM250 441h1v1h-1zM180 444h1v1h-1zM204 441h1v1h-1zM230 451h1v1h-1zM317 416h1v1h-1zM80 453h1v1h-1zM83 449h1v1h-1zM132 445h1v1h-1zM249 451h1v1h-1zM417 412h1v1h-1zM348 375h1v1h-1zM287 449h1v1h-1zM214 435h1v1h-1zM81 452h1v1h-1zM87 439h1v1h-1zM100 443h1v1h-1zM157 450h1v1h-1zM164 422h1v1h-1zM98 445h1v1h-1zM278 442h1v1h-1zM110 441h1v1h-1zM385 408h1v1h-1zM133 457h1v1h-1zM142 453h1v1h-1zM117 443h1v1h-1zM217 425h1v1h-1zM162 446h1v1h-1zM300 430h1v1h-1zM256 447h1v1h-1zM280 432h1v1h-1zM356 383h1v1h-1zM156 455h1v1h-1zM235 453h1v1h-1zM249 429h1v1h-1zM145 444h1v1h-1zM364 445h1v1h-1zM305 441h1v1h-1zM87 441h1v1h-1zM165 438h1v1h-1zM433 414h1v1h-1zM69 444h1v1h-1zM295 430h1v1h-1zM199 426h1v1h-1zM58 448h1v1h-1zM298 417h1v1h-1zM262 438h1v1h-1zM265 433h1v1h-1zM93 445h1v1h-1zM303 432h1v1h-1zM153 436h1v1h-1zM378 434h1v1h-1zM280 449h1v1h-1zM78 450h1v1h-1zM204 441h1v1h-1zM252 436h1v1h-1zM365 430h1v1h-1zM322 431h1v1h-1zM188 446h1v1h-1zM72 396h1v1h-1zM281 451h1v1h-1zM197 443h1v1h-1zM159 443h1v1h-1zM140 434h1v1h-1zM189 451h1v1h-1zM259 341h1v1h-1zM80 449h1v1h-1zM251 446h1v1h-1zM371 409h1v1h-1zM82 445h1v1h-1zM173 452h1v1h-1zM257 439h1v1h-1zM241 445h1v1h-1zM415 440h1v1h-1zM66 444h1v1h-1zM353 428h1v1h-1zM173 450h1v1h-1zM166 395h1v1h-1zM266 452h1v1h-1zM473 421h1v1h-1zM420 442h1v1h-1zM257 416h1v1h-1zM249 432h1v1h-1zM424 435h1v1h-1zM246 451h1v1h-1zM235 432h1v1h-1zM292 436h1v1h-1zM180 436h1v1h-1zM277 392h1v1h-1zM129 448h1v1h-1zM308 393h1v1h-1zM454 430h1v1h-1zM296 419h1v1h-1zM396 433h1v1h-1zM398 425h1v1h-1zM138 445h1v1h-1zM119 448h1v1h-1zM162 445h1v1h-1zM309 438h1v1h-1zM353 426h1v1h-1zM92 435h1v1h-1zM264 436h1v1h-1zM362 429h1v1h-1zM254 425h1v1h-1zM230 423h1v1h-1zM94 451h1v1h-1zM326 421h1v1h-1zM105 447h1v1h-1zM101 432h1v1h-1zM202 437h1v1h-1zM331 417h1v1h-1zM63 440h1v1h-1zM368 426h1v1h-1zM245 454h1v1h-1zM116 451h1v1h-1zM98 446h1v1h-1zM239 448h1v1h-1zM278 427h1v1h-1zM125 454h1v1h-1zM69 447h1v1h-1zM114 450h1v1h-1zM146 421h1v1h-1zM210 448h1v1h-1zM137 438h1v1h-1zM229 431h1v1h-1zM313 430h1v1h-1zM178 436h1v1h-1zM61 456h1v1h-1zM385 436h1v1h-1zM461 433h1v1h-1zM143 455h1v1h-1zM306 426h1v1h-1zM486 392h1v1h-1zM112 443h1v1h-1zM84 441h1v1h-1zM135 449h1v1h-1zM365 443h1v1h-1zM128 446h1v1h-1zM300 437h1v1h-1zM231 438h1v1h-1zM425 418h1v1h-1zM316 421h1v1h-1zM131 442h1v1h-1zM259 430h1v1h-1zM108 448h1v1h-1zM419 436h1v1h-1zM109 450h1v1h-1zM192 449h1v1h-1zM232 432h1v1h-1zM156 440h1v1h-1zM259 439h1v1h-1zM109 445h1v1h-1zM332 444h1v1h-1zM196 434h1v1h-1zM151 443h1v1h-1zM219 447h1v1h-1zM153 438h1v1h-1zM208 447h1v1h-1zM295 428h1v1h-1zM109 440h1v1h-1zM337 447h1v1h-1zM81 449h1v1h-1zM91 441h1v1h-1zM170 450h1v1h-1zM285 436h1v1h-1zM71 446h1v1h-1zM191 437h1v1h-1zM269 442h1v1h-1zM255 435h1v1h-1zM308 422h1v1h-1zM271 418h1v1h-1zM93 444h1v1h-1zM145 436h1v1h-1zM77 446h1v1h-1zM107 441h1v1h-1zM80 441h1v1h-1zM350 411h1v1h-1zM344 437h1v1h-1zM249 443h1v1h-1zM134 443h1v1h-1zM275 433h1v1h-1zM223 415h1v1h-1zM258 447h1v1h-1zM184 444h1v1h-1zM99 447h1v1h-1zM128 454h1v1h-1zM312 446h1v1h-1zM273 438h1v1h-1zM123 451h1v1h-1zM402 423h1v1h-1zM124 437h1v1h-1zM222 453h1v1h-1zM150 425h1v1h-1zM147 448h1v1h-1zM201 426h1v1h-1zM184 452h1v1h-1zM375 429h1v1h-1zM229 443h1v1h-1zM101 447h1v1h-1zM311 398h1v1h-1zM82 448h1v1h-1zM117 428h1v1h-1zM124 448h1v1h-1zM81 458h1v1h-1zM453 423h1v1h-1zM115 441h1v1h-1zM150 447h1v1h-1zM384 433h1v1h-1zM199 425h1v1h-1zM382 437h1v1h-1zM167 412h1v1h-1zM218 426h1v1h-1zM249 440h1v1h-1zM207 431h1v1h-1zM313 401h1v1h-1zM114 440h1v1h-1zM437 426h1v1h-1zM239 408h1v1h-1zM59 433h1v1h-1zM73 455h1v1h-1zM293 444h1v1h-1zM192 454h1v1h-1zM156 439h1v1h-1zM424 400h1v1h-1zM164 433h1v1h-1zM146 444h1v1h-1zM212 455h1v1h-1zM86 442h1v1h-1zM101 437h1v1h-1zM252 439h1v1h-1zM309 435h1v1h-1zM277 450h1v1h-1zM481 416h1v1h-1zM255 440h1v1h-1zM75 452h1v1h-1zM68 454h1v1h-1zM266 436h1v1h-1zM142 443h1v1h-1zM219 439h1v1h-1zM467 430h1v1h-1zM296 440h1v1h-1zM238 433h1v1h-1zM161 452h1v1h-1zM395 433h1v1h-1zM85 448h1v1h-1zM399 426h1v1h-1zM444 429h1v1h-1zM95 441h1v1h-1zM63 435h1v1h-1zM322 433h1v1h-1zM334 438h1v1h-1zM299 436h1v1h-1zM200 443h1v1h-1zM303 381h1v1h-1zM203 426h1v1h-1zM114 456h1v1h-1zM347 417h1v1h-1zM135 454h1v1h-1zM317 359h1v1h-1zM91 452h1v1h-1zM148 430h1v1h-1zM271 436h1v1h-1zM298 438h1v1h-1zM294 443h1v1h-1zM90 455h1v1h-1zM177 446h1v1h-1zM198 389h1v1h-1zM112 431h1v1h-1zM76 435h1v1h-1zM179 437h1v1h-1zM219 431h1v1h-1zM277 438h1v1h-1zM86 442h1v1h-1zM308 439h1v1h-1zM409 417h1v1h-1zM346 431h1v1h-1zM83 437h1v1h-1zM240 440h1v1h-1zM328 444h1v1h-1zM158 443h1v1h-1zM67 452h1v1h-1zM405 443h1v1h-1zM190 450h1v1h-1zM296 444h1v1h-1zM111 444h1v1h-1zM284 440h1v1h-1zM336 448h1v1h-1zM180 430h1v1h-1zM158 451h1v1h-1zM314 442h1v1h-1zM270 434h1v1h-1zM255 430h1v1h-1zM199 416h1v1h-1zM64 459h1v1h-1zM180 443h1v1h-1zM196 452h1v1h-1zM100 442h1v1h-1zM72 456h1v1h-1zM133 443h1v1h-1zM204 431h1v1h-1zM177 446h1v1h-1zM116 449h1v1h-1zM238 452h1v1h-1zM415 434h1v1h-1zM56 429h1v1h-1zM436 409h1v1h-1zM381 425h1v1h-1zM87 383h1v1h-1zM122 450h1v1h-1zM244 442h1v1h-1zM81 450h1v1h-1zM370 416h1v1h-1zM390 429h1v1h-1zM94 452h1v1h-1zM277 420h1v1h-1zM232 366h1v1h-1zM382 380h1v1h-1zM195 413h1v1h-1zM248 386h1v1h-1zM227 391h1v1h-1zM249 402h1v1h-1zM210 419h1v1h-1zM186 447h1v1h-1zM126 433h1v1h-1zM256 411h1v1h-1zM463 417h1v1h-1zM241 415h1v1h-1zM56 440h1v1h-1zM302 441h1v1h-1zM169 402h1v1h-1zM462 416h1v1h-1zM79 442h1v1h-1zM321 446h1v1h-1zM124 433h1v1h-1zM460 416h1v1h-1zM149 416h1v1h-1zM125 442h1v1h-1zM229 446h1v1h-1zM80 456h1v1h-1zM115 454h1v1h-1zM73 440h1v1h-1zM306 442h1v1h-1zM120 445h1v1h-1zM164 437h1v1h-1zM340 429h1v1h-1zM126 430h1v1h-1zM71 443h1v1h-1zM289 450h1v1h-1zM240 435h1v1h-1zM323 423h1v1h-1zM219 431h1v1h-1zM327 419h1v1h-1zM63 436h1v1h-1z" fill="#1e7fff"/><path d="M52 489.5H54M52 472.5H54M52 455.5H54M52 438.5H54M52 421.5H54M52 404.5H54M52 387.5H54M52 370.5H54M52 353.5H54M52 336.5H54M52 319.5H54M52 302.5H54M52 285.5H54M52 268.5H54M52 251.5H54M52 234.5H54M52 217.5H54M52 200.5H54M52 183.5H54M52 166.5H54M56.5 491V493M101.5 491V493M147.5 491V493M193.5 491V493M239.5 491V493M285.5 491V493M330.5 491V493M376.5 491V493M422.5 491V493M468.5 491V493M514.5 491V493" stroke="#6a6a6a"/></svg>
<div class="a" style="left:56px;top:136px;font-size:11px">ms</div>
<div class="yl" style="top:142px">200.0</div><div class="yl" style="top:176px">180.0</div><div class="yl" style="top:210px">160.0</div><div class="yl" style="top:244px">140.0</div><div class="yl" style="top:278px">120.0</div><div class="yl" style="top:312px">100.0</div><div class="yl" style="top:347px">80.0</div><div class="yl" style="top:381px">60.0</div><div class="yl" style="top:415px">40.0</div><div class="yl" style="top:449px">20.0</div>
<div class="xl" style="left:34.5px">0</div><div class="xl" style="left:80.3px">200</div><div class="xl" style="left:126.1px">400</div><div class="xl" style="left:171.9px">600</div><div class="xl" style="left:217.7px">800</div><div class="xl" style="left:263.5px">1000</div><div class="xl" style="left:309.3px">1200</div><div class="xl" style="left:355.1px">1400</div><div class="xl" style="left:400.9px">1600</div><div class="xl" style="left:446.7px">1800</div>
<div class="a" style="left:494px;top:493px;font-size:11px;line-height:14px">2000gB</div>

<!-- right panel -->
<div class="a" style="left:552px;top:147px;width:86px;height:24px;background:#e1e1e1;border:1px solid #3c7fb1">
 <div class="a" style="left:2px;top:2px;width:80px;height:18px;border:1px dotted #222"></div>
 <div class="a" style="left:0;top:3px;width:84px;text-align:center;font-size:12px">开始</div></div>
<div class="a sep" style="left:543px;top:184px;width:118px"></div>
<div class="a" style="left:548px;top:192px;width:12px;height:12px;border-radius:50%;border:1px solid #555;background:#fff"><div class="a" style="left:2.5px;top:2.5px;width:5px;height:5px;border-radius:50%;background:#222"></div></div>
<div class="a lbl" style="left:564px;top:191px">读取</div>
<div class="a" style="left:548px;top:211px;width:12px;height:12px;border-radius:50%;border:1px solid #555;background:#fff"></div>
<div class="a lbl" style="left:564px;top:210px">写入</div>
<div class="a sep" style="left:543px;top:229px;width:118px"></div>
<div class="a cb" style="left:548px;top:239px"></div>
<div class="a lbl" style="left:564px;top:238px">快捷行程</div>
<div class="a" style="left:548px;top:261px;width:72px;height:23px;border:1px solid #b4b4b4;background:#fff"></div>
<div class="a lbl" style="left:551px;top:265px;color:#707070">40</div>
<div class="a" style="left:602px;top:262px;width:17px;height:10px;background:#e8e8e8;border:1px solid #c8c8c8"></div>
<div class="a" style="left:602px;top:272px;width:17px;height:11px;background:#e8e8e8;border:1px solid #c8c8c8"></div>
<svg class="a" style="left:606px;top:265px" width="9" height="15"><path d="M1.5 4.5L4.5 1.5L7.5 4.5" stroke="#8a8a8a" stroke-width="1.1" fill="none"/><path d="M1.5 10L4.5 13L7.5 10" stroke="#8a8a8a" stroke-width="1.1" fill="none"/></svg><div class="a lbl" style="left:635px;top:265px">gB</div>
<div class="a sep" style="left:543px;top:294px;width:116px"></div>
<div class="a cb" style="left:548px;top:309px"><svg class="a" style="left:1px;top:1px" width="10" height="10"><path d="M1.3 4.8L3.8 7.6L9.2 1.4" stroke="#1a1a1a" stroke-width="2.3" fill="none"/></svg></div>
<div class="a lbl" style="left:564px;top:308px">4 KB 对齐</div>

<!-- table -->
<div class="a hd" style="left:44px;width:105px">传输数据大小</div>
<div class="a hd" style="left:151px;width:127px">操作/秒</div>
<div class="a hd" style="left:280px;width:132px">平均存取时间</div>
<div class="a hd" style="left:414px;width:126px">最大存取时间</div>
<div class="a hd" style="left:542px;width:109px">平均速度</div>
<div class="a" style="left:44px;top:533px;width:607px;height:2px;background:#6e6a6e"></div>
<div class="a vl" style="left:149px"></div>
<div class="a vl" style="left:277px"></div>
<div class="a vl" style="left:411px"></div>
<div class="a vl" style="left:539px"></div>
<div class="a sq" style="top:544px;background:#ffff00"></div><div class="a cb" style="left:44px;top:542px"><svg class="a" style="left:1px;top:1px" width="10" height="10"><path d="M1.3 4.8L3.8 7.6L9.2 1.4" stroke="#1a1a1a" stroke-width="2.3" fill="none"/></svg></div><div class="a lbl" style="left:60px;top:542px">512 字节</div><div class="a val" style="left:150px;width:106px;top:539px">64 IOPS</div><div class="a val" style="left:280px;width:104px;top:539px">15.516 ms</div><div class="a val" style="left:414px;width:99px;top:539px">58.719 ms</div><div class="a val" style="left:542px;width:98px;top:539px">0.031 MB/秒</div><div class="a sq" style="top:563px;background:#ff0000"></div><div class="a cb" style="left:44px;top:561px"><svg class="a" style="left:1px;top:1px" width="10" height="10"><path d="M1.3 4.8L3.8 7.6L9.2 1.4" stroke="#1a1a1a" stroke-width="2.3" fill="none"/></svg></div><div class="a lbl" style="left:60px;top:561px">4 KB</div><div class="a val" style="left:150px;width:106px;top:558px">63 IOPS</div><div class="a val" style="left:280px;width:104px;top:558px">15.821 ms</div><div class="a val" style="left:414px;width:99px;top:558px">70.128 ms</div><div class="a val" style="left:542px;width:98px;top:558px">0.247 MB/秒</div><div class="a sq" style="top:582px;background:#00ff00"></div><div class="a cb" style="left:44px;top:580px"><svg class="a" style="left:1px;top:1px" width="10" height="10"><path d="M1.3 4.8L3.8 7.6L9.2 1.4" stroke="#1a1a1a" stroke-width="2.3" fill="none"/></svg></div><div class="a lbl" style="left:60px;top:580px">64 KB</div><div class="a val" style="left:150px;width:106px;top:577px">57 IOPS</div><div class="a val" style="left:280px;width:104px;top:577px">17.491 ms</div><div class="a val" style="left:414px;width:99px;top:577px">58.176 ms</div><div class="a val" style="left:542px;width:98px;top:577px">3.573 MB/秒</div><div class="a sq" style="top:602px;background:#1a7ff0"></div><div class="a cb" style="left:44px;top:600px"><svg class="a" style="left:1px;top:1px" width="10" height="10"><path d="M1.3 4.8L3.8 7.6L9.2 1.4" stroke="#1a1a1a" stroke-width="2.3" fill="none"/></svg></div><div class="a lbl" style="left:60px;top:600px">1 MB</div><div class="a val" style="left:150px;width:106px;top:597px">36 IOPS</div><div class="a val" style="left:280px;width:104px;top:597px">27.762 ms</div><div class="a val" style="left:414px;width:99px;top:597px">116.601 ms</div><div class="a val" style="left:542px;width:98px;top:597px">36.020 MB/秒</div><div class="a sq" style="top:623px;background:#00ffff"></div><div class="a cb" style="left:44px;top:621px"><svg class="a" style="left:1px;top:1px" width="10" height="10"><path d="M1.3 4.8L3.8 7.6L9.2 1.4" stroke="#1a1a1a" stroke-width="2.3" fill="none"/></svg></div><div class="a lbl" style="left:60px;top:621px">随机</div><div class="a val" style="left:150px;width:106px;top:618px">44 IOPS</div><div class="a val" style="left:280px;width:104px;top:618px">22.233 ms</div><div class="a val" style="left:414px;width:99px;top:618px">63.784 ms</div><div class="a val" style="left:542px;width:98px;top:618px">22.821 MB/秒</div>
<svg class="a" style="left:42px;top:94px" width="10" height="18" viewBox="0 0 10 18"><defs><linearGradient id="gy1" x1="0" x2="1"><stop offset="0" stop-color="#ffff70"/><stop offset="0.5" stop-color="#e8e800"/><stop offset="1" stop-color="#a8a800"/></linearGradient></defs><path d="M1.6 4.2Q1.6 1.6 5 1.6Q8.4 1.6 8.4 4.2L6.6 12.6H3.4Z" fill="url(#gy1)" stroke="#000" stroke-width="1.3"/><ellipse cx="5" cy="15.3" rx="2.6" ry="1.8" fill="#c8c800" stroke="#000" stroke-width="1.2"/></svg><svg class="a" style="left:43px;top:114px" width="17" height="18" viewBox="0 0 17 18"><defs><linearGradient id="gd1" x1="0" y1="0" x2="1" y2="1"><stop offset="0" stop-color="#fff"/><stop offset="1" stop-color="#d0d0d0"/></linearGradient></defs><path d="M1.5 1.5H11.5L14.5 4.5V16.5H1.5Z" fill="url(#gd1)" stroke="#000" stroke-width="1.1"/><path d="M6 5.5Q6 3.5 8 3.5Q10 3.5 10 5.5L8.8 11H7.2Z" fill="#e020e0" stroke="#300030" stroke-width="0.9"/><ellipse cx="8" cy="14" rx="1.6" ry="1.1" fill="#e020e0" stroke="#300030" stroke-width="0.8"/></svg><svg class="a" style="left:129px;top:94px" width="11" height="18" viewBox="0 0 11 18"><defs><linearGradient id="gb1" x1="0" y1="0" x2="1" y2="1"><stop offset="0" stop-color="#3090ff"/><stop offset="1" stop-color="#0030e0"/></linearGradient></defs><rect x="2.5" y="1.5" width="6" height="4" rx="1.2" fill="#20c0f0" stroke="#000" stroke-width="1.1"/><path d="M1.5 7.5H8.5V15.5H9.5V16.5H1.5V15.5H3.5V9.5H1.5Z" fill="url(#gb1)" stroke="#000" stroke-width="1.1"/></svg><svg class="a" style="left:238px;top:94px" width="18" height="18" viewBox="0 0 18 18"><path d="M6.5 1.5H11.5V6.5H16.5V11.5H11.5V16.5H6.5V11.5H1.5V6.5H6.5Z" fill="#e62222" stroke="#000" stroke-width="1.2"/></svg><svg class="a" style="left:350px;top:94px" width="18" height="18" viewBox="0 0 18 18"><path d="M10 10L16 16" stroke="#000" stroke-width="4.2" stroke-linecap="round"/><path d="M10 10L16 16" stroke="#1010d0" stroke-width="2.2" stroke-linecap="round"/><path d="M4 1.5H8L11 4.5V8.5L8 11.5H4L1.5 8.5V4.5Z" fill="#44e044" stroke="#000" stroke-width="1.2"/><path d="M4.5 4L6 3M6.5 8.5L9 6" stroke="#d8ffd8" stroke-width="0.8"/></svg><svg class="a" style="left:462px;top:94px" width="17" height="18" viewBox="0 0 17 18"><defs><linearGradient id="gf1" x1="0" y1="0" x2="1" y2="1"><stop offset="0" stop-color="#ffe060"/><stop offset="1" stop-color="#d8a000"/></linearGradient></defs><path d="M1.5 16.5V3L2.5 1.5H6.5L8 3.5H13.5V5.5H15.5V16.5Z" fill="#f0d040" stroke="#000" stroke-width="1.2"/><rect x="3.5" y="5.5" width="12" height="11" fill="url(#gf1)" stroke="#000" stroke-width="1.2"/><path d="M13.5 6V16" stroke="#c0c0c0" stroke-width="0.8"/></svg><svg class="a" style="left:597px;top:94px" width="16" height="18" viewBox="0 0 16 18"><defs><linearGradient id="gt1" x1="0" x2="1"><stop offset="0" stop-color="#606060"/><stop offset="0.3" stop-color="#f0f0f0"/><stop offset="0.6" stop-color="#808080"/><stop offset="1" stop-color="#202020"/></linearGradient></defs><rect x="3" y="5" width="10" height="12" fill="url(#gt1)" stroke="#000" stroke-width="1.2"/><rect x="1.5" y="3" width="13" height="3" fill="#d0d0d0" stroke="#000" stroke-width="1.1"/><rect x="6" y="1.2" width="4" height="2" fill="#000"/></svg><svg class="a" style="left:165px;top:114px" width="18" height="18" viewBox="0 0 18 18"><defs><linearGradient id="gp1" x1="0" y1="0" x2="1" y2="1"><stop offset="0" stop-color="#ffffff"/><stop offset="1" stop-color="#fff0a0"/></linearGradient></defs><rect x="1.5" y="1.5" width="15" height="15" fill="url(#gp1)" stroke="#000" stroke-width="1.3"/><path d="M2 7.5H4V16H2Z M5.5 11H7V16H5.5Z M10 7.5H12V16H10Z M14 10.5H16V16H14Z" fill="#00f000"/><path d="M3.5 10H5.5V16H3.5Z M7.5 6.5H8.5V16H7.5Z M12 9.5H14V16H12Z" fill="#4040ff"/></svg><svg class="a" style="left:299px;top:114px" width="18" height="17" viewBox="0 0 18 17"><ellipse cx="3" cy="8.5" rx="1.9" ry="2.8" fill="#f0f000" stroke="#000" stroke-width="1.2"/><path d="M4.5 5.5L11.5 1V16L4.5 11.5Z" fill="#f0f000" stroke="#000" stroke-width="1.3"/><path d="M8.5 3.5V14" stroke="#707070" stroke-width="0.8"/><path d="M13.5 5.5Q15 8.5 13.5 11.5M15 3.5Q17.6 8.5 15 13.5" stroke="#000" stroke-width="1.1" fill="none" stroke-dasharray="1.3 0.7"/></svg><svg class="a" style="left:446px;top:113px" width="17" height="17" viewBox="0 0 17 17"><defs><linearGradient id="gp2" x1="0" y1="0" x2="1" y2="1"><stop offset="0" stop-color="#ffffff"/><stop offset="1" stop-color="#fff0a0"/></linearGradient></defs><rect x="0.6" y="0.6" width="15" height="15" fill="url(#gp2)" stroke="#000" stroke-width="1.3"/><rect x="2.75" y="6.75" width="1.7" height="1.7" rx="0.5" fill="#0010ff"/><rect x="1.75" y="8.75" width="1.7" height="1.7" rx="0.5" fill="#0010ff"/><rect x="4.75" y="9.75" width="1.7" height="1.7" rx="0.5" fill="#0010ff"/><rect x="6.75" y="6.75" width="1.7" height="1.7" rx="0.5" fill="#0010ff"/><rect x="8.75" y="4.75" width="1.7" height="1.7" rx="0.5" fill="#0010ff"/><rect x="10.75" y="3.75" width="1.7" height="1.7" rx="0.5" fill="#0010ff"/><rect x="10.75" y="5.75" width="1.7" height="1.7" rx="0.5" fill="#0010ff"/><rect x="2.75" y="9.75" width="1.7" height="1.7" rx="0.5" fill="#ff0000"/><rect x="2.75" y="11.75" width="1.7" height="1.7" rx="0.5" fill="#ff0000"/><rect x="6.75" y="8.75" width="1.7" height="1.7" rx="0.5" fill="#ff0000"/><rect x="6.75" y="11.75" width="1.7" height="1.7" rx="0.5" fill="#ff0000"/><rect x="8.75" y="10.75" width="1.7" height="1.7" rx="0.5" fill="#ff0000"/><rect x="10.75" y="8.75" width="1.7" height="1.7" rx="0.5" fill="#ff0000"/><rect x="11.75" y="10.75" width="1.7" height="1.7" rx="0.5" fill="#ff0000"/><rect x="1.75" y="13.75" width="1.7" height="1.7" rx="0.5" fill="#ff0000"/></svg><svg class="a" style="left:567px;top:114px" width="18" height="18" viewBox="0 0 18 18"><defs><linearGradient id="gp3" x1="0" y1="0" x2="1" y2="1"><stop offset="0" stop-color="#ffffff"/><stop offset="1" stop-color="#fff0a0"/></linearGradient></defs><rect x="1.5" y="1.5" width="15" height="15" fill="url(#gp3)" stroke="#000" stroke-width="1.3"/><path d="M2 8H4V16H2Z M5.5 11.5H6.5V16H5.5Z" fill="#00f000"/><path d="M3.5 11H5.5V16H3.5Z" fill="#4040ff"/><rect x="7.5" y="7.5" width="9" height="9" fill="#fff" stroke="#000" stroke-width="1"/><rect x="8" y="8" width="8" height="1.6" fill="#0000e0"/><circle cx="9.8" cy="11" r="0.75" fill="#ff2020"/><circle cx="11.9" cy="11" r="0.75" fill="#2040ff"/><circle cx="14.0" cy="11" r="0.75" fill="#ff2020"/><circle cx="9.8" cy="13" r="0.75" fill="#00c000"/><circle cx="11.9" cy="13" r="0.75" fill="#ff2020"/><circle cx="14.0" cy="13" r="0.75" fill="#ff2020"/><circle cx="9.8" cy="15" r="0.75" fill="#ff2020"/><circle cx="11.9" cy="15" r="0.75" fill="#ff2020"/><circle cx="14.0" cy="15" r="0.75" fill="#2040ff"/></svg><svg class="a" style="left:355px;top:55px" width="27" height="24" viewBox="0 0 27 24"><path d="M6.5 4.5H12L13.5 6V17.5H6.5Z" fill="#fff" stroke="#000" stroke-width="1.1"/><path d="M7.5 8H12.5M7.5 10.5H12.5M7.5 13H12.5" stroke="#1e90ff" stroke-width="1.2"/><path d="M12.5 6.5H19L21.5 9V19.5H12.5Z" fill="#ececec" stroke="#000" stroke-width="1.1"/><path d="M14 10.5H20M14 13.5H20M14 16.5H20" stroke="#1e90ff" stroke-width="1.3"/><path d="M13 20H22V10" stroke="#555" stroke-width="0.8" fill="none"/></svg><svg class="a" style="left:385px;top:55px" width="27" height="24" viewBox="0 0 27 24"><path d="M6.5 4.5H12L13.5 6V17.5H6.5Z" fill="#fff" stroke="#000" stroke-width="1.1"/><rect x="7.5" y="8" width="5" height="6" fill="#20c040"/><rect x="7.5" y="8" width="5" height="1.4" fill="#20c8f0"/><circle cx="9.5" cy="11" r="1.2" fill="#ff2020"/><path d="M12.5 6.5H19L21.5 9V19.5H12.5Z" fill="#ececec" stroke="#000" stroke-width="1.1"/><rect x="14" y="10.5" width="6" height="7" fill="#20c040"/><rect x="14" y="10.5" width="6" height="1.5" fill="#20c8f0"/><circle cx="16.5" cy="14" r="1.4" fill="#ff2020"/><path d="M13 20H22V10" stroke="#555" stroke-width="0.8" fill="none"/></svg><svg class="a" style="left:415px;top:55px" width="27" height="24" viewBox="0 0 27 24"><path d="M10 5.5Q10 4.5 11 4.5H16Q17 4.5 17 5.5V7" fill="none" stroke="#fff" stroke-width="2.6"/><rect x="5.5" y="6.5" width="16" height="11" rx="1.5" fill="#2a2a2a" stroke="#fff" stroke-width="1.4"/><path d="M10.5 7V5.8Q10.5 5 11.3 5H15.7Q16.5 5 16.5 5.8V7" fill="none" stroke="#2a2a2a" stroke-width="1.4"/><circle cx="13.5" cy="12" r="3.2" fill="#d8d8d8"/><circle cx="18" cy="10.5" r="1.1" fill="#20e040"/><path d="M6.5 7.5V16.5" stroke="#555" stroke-width="1"/></svg><svg class="a" style="left:445px;top:55px" width="27" height="24" viewBox="0 0 27 24"><polygon points="16.40,8.00 14.70,9.53 14.82,11.82 12.53,11.70 11.00,13.40 9.47,11.70 7.18,11.82 7.30,9.53 5.60,8.00 7.30,6.47 7.18,4.18 9.47,4.30 11.00,2.60 12.53,4.30 14.82,4.18 14.70,6.47" fill="#e8e000" stroke="#4a4a00" stroke-width="0.9"/><polygon points="22.10,13.60 20.40,15.13 20.52,17.42 18.23,17.30 16.70,19.00 15.17,17.30 12.88,17.42 13.00,15.13 11.30,13.60 13.00,12.07 12.88,9.78 15.17,9.90 16.70,8.20 18.23,9.90 20.52,9.78 20.40,12.07" fill="#e8e000" stroke="#4a4a00" stroke-width="0.9"/><path d="M11 3V9.5M16.7 8.5V15" stroke="#8888a0" stroke-width="1.8"/></svg><svg class="a" style="left:480px;top:55px" width="27" height="24" viewBox="0 0 27 24"><defs><linearGradient id="gpu" x1="0" y1="0" x2="1" y2="1"><stop offset="0" stop-color="#e060e0"/><stop offset="0.5" stop-color="#c010c0"/><stop offset="1" stop-color="#800080"/></linearGradient></defs><rect x="3.5" y="2" width="19" height="19" rx="2" fill="url(#gpu)"/><path d="M13 5V15" stroke="#fff" stroke-width="2"/><path d="M7.5 11.5L13 17.5L18.5 11.5Z" fill="#fff"/></svg><svg class="a" style="left:252px;top:55px" width="27" height="24" viewBox="0 0 27 24"><rect x="12.5" y="2.5" width="4" height="13" fill="#ee1111" stroke="#222" stroke-width="1"/><rect x="13" y="3" width="3" height="3.5" fill="#40d8e8"/><circle cx="13.5" cy="16" r="3.6" fill="#ee1111" stroke="#222" stroke-width="0.9"/><path d="M10.6 15.5Q11 17.5 13 18" stroke="#40d8e8" stroke-width="1" fill="none"/><path d="M12.5 15.5Q12.7 16.6 13.8 16.8" stroke="#fff" stroke-width="1" fill="none"/></svg><svg class="a" style="left:8.5px;top:4.5px" width="16" height="16" viewBox="0 0 16 16"><defs><radialGradient id="gpl"><stop offset="0" stop-color="#fff4c8"/><stop offset="1" stop-color="#e8a848"/></radialGradient></defs><g transform="translate(8 8) rotate(40) scale(0.85) translate(-8 -8)"><rect x="3" y="1.5" width="10" height="13" rx="1" fill="#1e1e1e"/><circle cx="8.3" cy="6.3" r="4" fill="url(#gpl)"/><circle cx="8.3" cy="6.3" r="1.3" fill="#c0c4d8"/><rect x="5.5" y="10.5" width="4" height="3" fill="#a0a0a0"/></g></svg>
</body></html>
